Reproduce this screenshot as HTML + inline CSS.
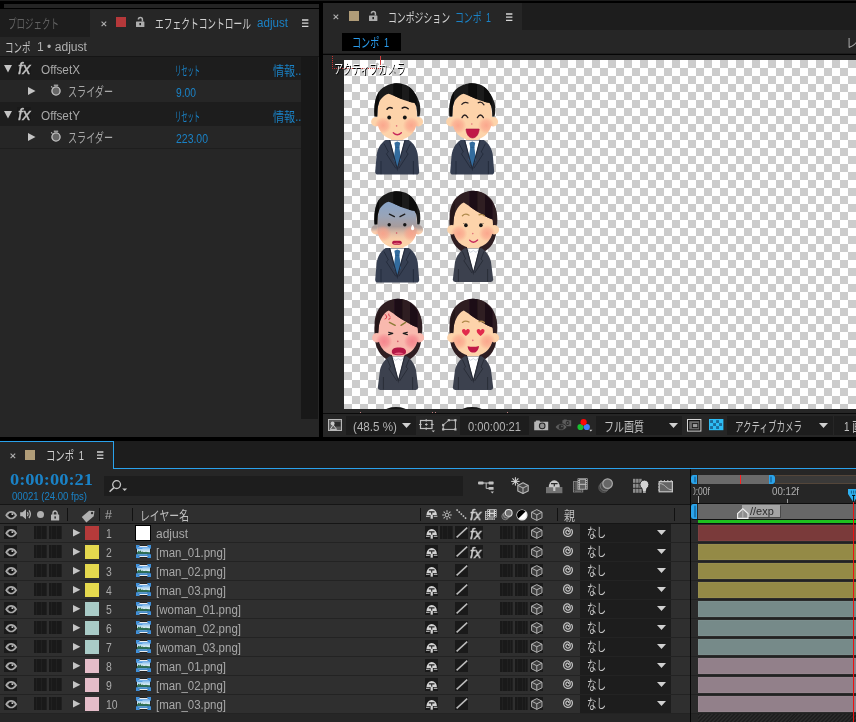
<!DOCTYPE html>
<html lang="ja"><head><meta charset="utf-8"><title>After Effects</title><style>
html,body{margin:0;padding:0;background:#000;}
body{width:856px;height:722px;overflow:hidden;position:relative;}
.a{position:absolute;}
.t{position:absolute;white-space:pre;transform-origin:0 50%;}
svg{overflow:visible;}
</style></head><body>
<svg class="a" width="0" height="0"><defs><linearGradient id="skyg" x1="0" y1="0" x2="0" y2="1"><stop offset="0" stop-color="#5ba0e6"/><stop offset="0.32" stop-color="#b4d8f2"/><stop offset="0.5" stop-color="#d6eaf4"/><stop offset="0.62" stop-color="#3f7f62"/><stop offset="0.7" stop-color="#2d6a58"/><stop offset="0.78" stop-color="#3a80b8"/><stop offset="1" stop-color="#4f94d4"/></linearGradient><filter id="hblur" x="-20%" y="-20%" width="140%" height="140%"><feGaussianBlur stdDeviation="0.7 0"/></filter><radialGradient id="cheek"><stop offset="0" stop-color="#fa9f88" stop-opacity="0.85"/><stop offset="0.55" stop-color="#fa9f88" stop-opacity="0.55"/><stop offset="1" stop-color="#fa9f88" stop-opacity="0"/></radialGradient><radialGradient id="cheekr"><stop offset="0" stop-color="#f4808a" stop-opacity="0.9"/><stop offset="0.55" stop-color="#f4808a" stop-opacity="0.6"/><stop offset="1" stop-color="#f4808a" stop-opacity="0"/></radialGradient><linearGradient id="shockg" gradientUnits="userSpaceOnUse" x1="0" y1="14" x2="0" y2="57"><stop offset="0" stop-color="#8ba4c6"/><stop offset="0.25" stop-color="#98a4b8"/><stop offset="0.5" stop-color="#a89c9c"/><stop offset="0.72" stop-color="#e0b8a4" stop-opacity="0.5"/><stop offset="0.9" stop-color="#fdd3aa" stop-opacity="0"/></linearGradient><linearGradient id="shockg2" x1="0" y1="0" x2="0" y2="1"><stop offset="0" stop-color="#a89c9c"/><stop offset="0.3" stop-color="#b4a49e"/><stop offset="0.7" stop-color="#f4ccb0"/><stop offset="1" stop-color="#fdd3aa"/></linearGradient></defs></svg>
<div class="a" style="left:0px;top:0px;width:856px;height:1px;background:#1b1b1b;"></div>
<div class="a" style="left:4px;top:4px;width:315px;height:4px;background:#242424;"></div>
<div class="a" style="left:0px;top:9px;width:319px;height:428px;background:#262626;"></div>
<div class="a" style="left:0px;top:9px;width:90px;height:28px;background:#1d1d1d;"></div>
<span class="t" style="left:8px;top:16.5px;font-family:'Liberation Sans','Noto Sans CJK JP',sans-serif;font-size:13px;font-weight:400;line-height:13px;color:#626262;transform:scaleX(0.6537);">プロジェクト</span>
<svg class="a" style="left:100.8px;top:20.8px;" width="6" height="6" viewBox="0 0 6 6"><path d="M0.6 0.6L5.2 5.2M5.2 0.6L0.6 5.2" stroke="#b0b0b0" stroke-width="1.1" fill="none"/></svg>
<div class="a" style="left:116px;top:17px;width:10px;height:10px;background:#b5383a;"></div>
<svg class="a" style="left:135.8px;top:17px;" width="9" height="10" viewBox="0 0 9 10"><rect x="0" y="4.4" width="8.4" height="5.6" rx="0.6" fill="#adadad"/><path d="M2.4 2.6A2 2 0 0 1 6.4 2.6V4.6" stroke="#adadad" stroke-width="1.5" fill="none"/><rect x="3.4" y="6" width="1.6" height="2.2" fill="#222"/></svg>
<span class="t" style="left:155px;top:16.5px;font-family:'Liberation Sans','Noto Sans CJK JP',sans-serif;font-size:13px;font-weight:400;line-height:13px;color:#d2d2d2;transform:scaleX(0.6713);">エフェクトコントロール</span>
<span class="t" style="left:257px;top:17px;font-family:'Liberation Sans','Noto Sans CJK JP',sans-serif;font-size:12px;font-weight:400;line-height:12px;color:#1a82c6;transform:scaleX(0.9678);">adjust</span>
<svg class="a" style="left:301.6px;top:18.6px;" width="7" height="9" viewBox="0 0 7 9"><path d="M0 1H6.4M0 4.2H6.4M0 7.4H6.4" stroke="#d6d6d6" stroke-width="1.3"/></svg>
<span class="t" style="left:5px;top:40.5px;font-family:'Liberation Sans','Noto Sans CJK JP',sans-serif;font-size:13px;font-weight:400;line-height:13px;color:#c4c4c4;transform:scaleX(0.6536);">コンポ</span>
<span class="t" style="left:36.5px;top:41px;font-family:'Liberation Sans','Noto Sans CJK JP',sans-serif;font-size:12px;font-weight:400;line-height:12px;color:#b0b0b0;transform:scaleX(1.0085);">1 • adjust</span>
<div class="a" style="left:0px;top:56px;width:319px;height:1px;background:#151515;"></div>
<div class="a" style="left:0px;top:57px;width:301px;height:23px;background:#1d1d1d;"></div>
<div class="a" style="left:0px;top:102px;width:301px;height:24px;background:#1d1d1d;"></div>
<div class="a" style="left:0px;top:148px;width:301px;height:1px;background:#1e1e1e;"></div>
<div class="a" style="left:301px;top:57px;width:17px;height:362px;background:#181818;"></div>
<svg class="a" style="left:4.2px;top:64.8px;" width="8" height="7.5" viewBox="0 0 8 7.5"><path d="M0 0H8L4.0 7.5Z" fill="#c4c4c4"/></svg>
<div class="a" style="left:17px;top:61px;width:14px;height:14px;background:#191919;"></div>
<span class="t" style="left:17.6px;top:60.5px;font-family:'Liberation Sans',sans-serif;font-size:16px;font-weight:400;line-height:16px;color:#c0c0c0;transform:scaleX(1.0118);font-style:italic;-webkit-text-stroke:0.4px #c0c0c0;will-change:transform;">fx</span>
<span class="t" style="left:41px;top:64px;font-family:'Liberation Sans','Noto Sans CJK JP',sans-serif;font-size:12px;font-weight:400;line-height:12px;color:#a9a9a9;transform:scaleX(0.9800);">OffsetX</span>
<span class="t" style="left:175px;top:63.5px;font-family:'Liberation Sans','Noto Sans CJK JP',sans-serif;font-size:13px;font-weight:400;line-height:13px;color:#1a82c6;transform:scaleX(0.4806);">リセット</span>
<span class="t" style="left:272.5px;top:63.5px;font-family:'Liberation Sans','Noto Sans CJK JP',sans-serif;font-size:13px;font-weight:400;line-height:13px;color:#1a82c6;transform:scaleX(0.8515);">情報..</span>
<svg class="a" style="left:28px;top:87px;" width="7.5" height="8" viewBox="0 0 7.5 8"><path d="M0 0L7.5 4.0L0 8Z" fill="#c4c4c4"/></svg>
<svg class="a" style="left:49.6px;top:84.2px;" width="12" height="13" viewBox="0 0 12 13"><circle cx="6" cy="7" r="4.1" fill="#666" stroke="#c4c4c4" stroke-width="1.3"/><path d="M3.8 1.2H8.2" stroke="#c4c4c4" stroke-width="1.1"/><path d="M1.2 2.4L2.4 3.6" stroke="#c4c4c4" stroke-width="1.1"/></svg>
<span class="t" style="left:68px;top:84.5px;font-family:'Liberation Sans','Noto Sans CJK JP',sans-serif;font-size:13px;font-weight:400;line-height:13px;color:#a9a9a9;transform:scaleX(0.6978);">スライダー</span>
<span class="t" style="left:176px;top:87px;font-family:'Liberation Sans','Noto Sans CJK JP',sans-serif;font-size:12px;font-weight:400;line-height:12px;color:#1a82c6;transform:scaleX(0.8562);">9.00</span>
<svg class="a" style="left:4.2px;top:110.8px;" width="8" height="7.5" viewBox="0 0 8 7.5"><path d="M0 0H8L4.0 7.5Z" fill="#c4c4c4"/></svg>
<div class="a" style="left:17px;top:107px;width:14px;height:14px;background:#191919;"></div>
<span class="t" style="left:17.6px;top:106.5px;font-family:'Liberation Sans',sans-serif;font-size:16px;font-weight:400;line-height:16px;color:#c0c0c0;transform:scaleX(1.0118);font-style:italic;-webkit-text-stroke:0.4px #c0c0c0;will-change:transform;">fx</span>
<span class="t" style="left:41px;top:110px;font-family:'Liberation Sans','Noto Sans CJK JP',sans-serif;font-size:12px;font-weight:400;line-height:12px;color:#a9a9a9;transform:scaleX(0.9800);">OffsetY</span>
<span class="t" style="left:175px;top:109.5px;font-family:'Liberation Sans','Noto Sans CJK JP',sans-serif;font-size:13px;font-weight:400;line-height:13px;color:#1a82c6;transform:scaleX(0.4806);">リセット</span>
<span class="t" style="left:272.5px;top:109.5px;font-family:'Liberation Sans','Noto Sans CJK JP',sans-serif;font-size:13px;font-weight:400;line-height:13px;color:#1a82c6;transform:scaleX(0.8515);">情報..</span>
<svg class="a" style="left:28px;top:133px;" width="7.5" height="8" viewBox="0 0 7.5 8"><path d="M0 0L7.5 4.0L0 8Z" fill="#c4c4c4"/></svg>
<svg class="a" style="left:49.6px;top:130.2px;" width="12" height="13" viewBox="0 0 12 13"><circle cx="6" cy="7" r="4.1" fill="#666" stroke="#c4c4c4" stroke-width="1.3"/><path d="M3.8 1.2H8.2" stroke="#c4c4c4" stroke-width="1.1"/><path d="M1.2 2.4L2.4 3.6" stroke="#c4c4c4" stroke-width="1.1"/></svg>
<span class="t" style="left:68px;top:130.5px;font-family:'Liberation Sans','Noto Sans CJK JP',sans-serif;font-size:13px;font-weight:400;line-height:13px;color:#a9a9a9;transform:scaleX(0.6978);">スライダー</span>
<span class="t" style="left:176px;top:133px;font-family:'Liberation Sans','Noto Sans CJK JP',sans-serif;font-size:12px;font-weight:400;line-height:12px;color:#1a82c6;transform:scaleX(0.8719);">223.00</span>
<div class="a" style="left:323px;top:3px;width:533px;height:434px;background:#262626;"></div>
<div class="a" style="left:522px;top:3px;width:334px;height:27px;background:#1d1d1d;"></div>
<svg class="a" style="left:333.4px;top:14.4px;" width="6" height="6" viewBox="0 0 6 6"><path d="M0.6 0.6L5.2 5.2M5.2 0.6L0.6 5.2" stroke="#b0b0b0" stroke-width="1.1" fill="none"/></svg>
<div class="a" style="left:349px;top:11px;width:10px;height:10px;background:#b09c78;"></div>
<svg class="a" style="left:368.8px;top:11px;" width="9" height="10" viewBox="0 0 9 10"><rect x="0" y="4.4" width="8.4" height="5.6" rx="0.6" fill="#adadad"/><path d="M2.4 2.6A2 2 0 0 1 6.4 2.6V4.6" stroke="#adadad" stroke-width="1.5" fill="none"/><rect x="3.4" y="6" width="1.6" height="2.2" fill="#222"/></svg>
<span class="t" style="left:388px;top:10.5px;font-family:'Liberation Sans','Noto Sans CJK JP',sans-serif;font-size:13px;font-weight:400;line-height:13px;color:#d2d2d2;transform:scaleX(0.6812);">コンポジション</span>
<span class="t" style="left:455px;top:10.5px;font-family:'Liberation Sans','Noto Sans CJK JP',sans-serif;font-size:13px;font-weight:400;word-spacing:3px;line-height:13px;color:#1a82c6;transform:scaleX(0.6813);">コンポ 1</span>
<svg class="a" style="left:505.8px;top:12.8px;" width="7" height="9" viewBox="0 0 7 9"><path d="M0 1H6.4M0 4.2H6.4M0 7.4H6.4" stroke="#d6d6d6" stroke-width="1.3"/></svg>
<div class="a" style="left:342px;top:33px;width:59px;height:18px;background:#000;"></div>
<span class="t" style="left:352px;top:35.5px;font-family:'Liberation Sans','Noto Sans CJK JP',sans-serif;font-size:13px;font-weight:400;word-spacing:3px;line-height:13px;color:#2a9cec;transform:scaleX(0.7002);">コンポ 1</span>
<span class="t" style="left:846px;top:35.5px;font-family:'Liberation Sans','Noto Sans CJK JP',sans-serif;font-size:13px;font-weight:400;line-height:13px;color:#a9a9a9;transform:scaleX(0.8714);">レンダ</span>
<div class="a" style="left:323px;top:54px;width:533px;height:1px;background:#050505;"></div>
<div class="a" style="left:323px;top:53px;width:533px;height:1px;background:#1c1c1c;"></div>
<div class="a" style="left:344px;top:60px;width:512px;height:349px;background:repeating-conic-gradient(#ccc 0 25%,#fff 0 50%) 0 0/16px 16px;"></div>
<svg class="a" style="left:370.8px;top:83px" width="52" height="92" viewBox="0 0 52 92"><rect x="20" y="48" width="12.4" height="13" fill="#fdd3aa"/><path d="M14.6 57C10 60 6.6 65 5.6 72L4.2 88.8Q4.2 91.6 6.9 91.6H45.5Q48.2 91.6 48.2 88.8L46.8 72C45.8 65 42.4 60 37.8 57Z" fill="#363f52"/><path d="M19.2 57.4H33.6L26.3 85.4Z" fill="#fff"/><path d="M23.4 59.8L26.3 58.6L29.2 59.8L28.4 64.4L30 76.6L26.3 84.4L22.6 76.6L24.2 64.4Z" fill="#336c9e"/><path d="M24.2 64.4H28.4" stroke="#245a8c" stroke-width="0.7"/><path d="M18.6 57.2L26.3 86L34 57.2" fill="none" stroke="#232a3a" stroke-width="1.1"/><path d="M13 60.6L17.4 69L15.4 70.8L24.8 85.4M39.4 60.6L35.2 69L37.2 70.8L27.8 85.4" fill="none" stroke="#232a3a" stroke-width="0.9"/><path d="M10 78V91.2M42.4 78V91.2" stroke="#232a3a" stroke-width="0.9"/><circle cx="4.8" cy="38.8" r="4.7" fill="#fdd3aa"/><circle cx="47.4" cy="38.8" r="4.7" fill="#fdd3aa"/><path d="M26 4C12 4 6.2 16 6.2 36C6.2 49 14.6 57 26 57C37.4 57 46 49 46 36C46 16 40 4 26 4Z" fill="#fdd3aa"/><clipPath id="fhc1"><path d="M26 4C12 4 6.2 16 6.2 36C6.2 49 14.6 57 26 57C37.4 57 46 49 46 36C46 16 40 4 26 4Z"/><circle cx="4.8" cy="38.8" r="4.7"/><circle cx="47.4" cy="38.8" r="4.7"/></clipPath><g clip-path="url(#fhc1)"><circle cx="12" cy="42.4" r="8.4" fill="url(#cheek)"/><circle cx="40.2" cy="42.4" r="8.4" fill="url(#cheek)"/></g><clipPath id="hc1"><path d="M3.5 33.6C2.8 27 3.4 19 5.6 13C7.6 8 11 4.6 15 3C18 1 21.5 0.2 25.2 0.2C30 0.2 34 1 37 3C42 6.4 46.4 13 48.6 20C49.6 24.6 49.6 30 48.5 33.6L46.2 33.6C46.2 30 46 27 45.6 25C45.2 22.6 44.4 21 43.4 19.8C38 19.4 31 16.4 25.2 13.8C22 12.4 19.6 11.2 17.5 10.7C14.6 11.4 11.4 14 9.1 17.3C7.4 20.4 6.7 24 6.6 27L6.3 33.6Z"/></clipPath><path d="M3.5 33.6C2.8 27 3.4 19 5.6 13C7.6 8 11 4.6 15 3C18 1 21.5 0.2 25.2 0.2C30 0.2 34 1 37 3C42 6.4 46.4 13 48.6 20C49.6 24.6 49.6 30 48.5 33.6L46.2 33.6C46.2 30 46 27 45.6 25C45.2 22.6 44.4 21 43.4 19.8C38 19.4 31 16.4 25.2 13.8C22 12.4 19.6 11.2 17.5 10.7C14.6 11.4 11.4 14 9.1 17.3C7.4 20.4 6.7 24 6.6 27L6.3 33.6Z" fill="#1b1b1b"/><g clip-path="url(#hc1)" filter="url(#hblur)"><rect x="22.6" y="-2" width="8" height="40" fill="#090909"/><rect x="38" y="-2" width="7.4" height="40" fill="#090909"/><rect x="-1" y="-2" width="9" height="40" fill="#090909" opacity="0.6"/></g><path d="M16 26.2Q18.2 23.4 21.2 25.2M31.2 25.2Q34.2 23.2 37.2 25.8" fill="none" stroke="#1a1414" stroke-width="1.5" stroke-linecap="round"/><circle cx="18.2" cy="34.5" r="1.9" fill="#151515"/><circle cx="33.8" cy="34.5" r="1.9" fill="#151515"/><circle cx="25.6" cy="42.9" r="0.8" fill="#e0707a"/><path d="M22.3 49.8Q26.2 53.8 30.4 49.8" fill="none" stroke="#c8285c" stroke-width="1.3" stroke-linecap="round"/></svg>
<svg class="a" style="left:445.8px;top:83px" width="52" height="92" viewBox="0 0 52 92"><rect x="20" y="48" width="12.4" height="13" fill="#fdd3aa"/><path d="M14.6 57C10 60 6.6 65 5.6 72L4.2 88.8Q4.2 91.6 6.9 91.6H45.5Q48.2 91.6 48.2 88.8L46.8 72C45.8 65 42.4 60 37.8 57Z" fill="#363f52"/><path d="M19.2 57.4H33.6L26.3 85.4Z" fill="#fff"/><path d="M23.4 59.8L26.3 58.6L29.2 59.8L28.4 64.4L30 76.6L26.3 84.4L22.6 76.6L24.2 64.4Z" fill="#336c9e"/><path d="M24.2 64.4H28.4" stroke="#245a8c" stroke-width="0.7"/><path d="M18.6 57.2L26.3 86L34 57.2" fill="none" stroke="#232a3a" stroke-width="1.1"/><path d="M13 60.6L17.4 69L15.4 70.8L24.8 85.4M39.4 60.6L35.2 69L37.2 70.8L27.8 85.4" fill="none" stroke="#232a3a" stroke-width="0.9"/><path d="M10 78V91.2M42.4 78V91.2" stroke="#232a3a" stroke-width="0.9"/><circle cx="4.8" cy="38.8" r="4.7" fill="#fdd3aa"/><circle cx="47.4" cy="38.8" r="4.7" fill="#fdd3aa"/><path d="M26 4C12 4 6.2 16 6.2 36C6.2 49 14.6 57 26 57C37.4 57 46 49 46 36C46 16 40 4 26 4Z" fill="#fdd3aa"/><clipPath id="fhc2"><path d="M26 4C12 4 6.2 16 6.2 36C6.2 49 14.6 57 26 57C37.4 57 46 49 46 36C46 16 40 4 26 4Z"/><circle cx="4.8" cy="38.8" r="4.7"/><circle cx="47.4" cy="38.8" r="4.7"/></clipPath><g clip-path="url(#fhc2)"><circle cx="12" cy="42.4" r="8.4" fill="url(#cheek)"/><circle cx="40.2" cy="42.4" r="8.4" fill="url(#cheek)"/></g><clipPath id="hc2"><path d="M3.5 33.6C2.8 27 3.4 19 5.6 13C7.6 8 11 4.6 15 3C18 1 21.5 0.2 25.2 0.2C30 0.2 34 1 37 3C42 6.4 46.4 13 48.6 20C49.6 24.6 49.6 30 48.5 33.6L46.2 33.6C46.2 30 46 27 45.6 25C45.2 22.6 44.4 21 43.4 19.8C38 19.4 31 16.4 25.2 13.8C22 12.4 19.6 11.2 17.5 10.7C14.6 11.4 11.4 14 9.1 17.3C7.4 20.4 6.7 24 6.6 27L6.3 33.6Z"/></clipPath><path d="M3.5 33.6C2.8 27 3.4 19 5.6 13C7.6 8 11 4.6 15 3C18 1 21.5 0.2 25.2 0.2C30 0.2 34 1 37 3C42 6.4 46.4 13 48.6 20C49.6 24.6 49.6 30 48.5 33.6L46.2 33.6C46.2 30 46 27 45.6 25C45.2 22.6 44.4 21 43.4 19.8C38 19.4 31 16.4 25.2 13.8C22 12.4 19.6 11.2 17.5 10.7C14.6 11.4 11.4 14 9.1 17.3C7.4 20.4 6.7 24 6.6 27L6.3 33.6Z" fill="#1b1b1b"/><g clip-path="url(#hc2)" filter="url(#hblur)"><rect x="22.6" y="-2" width="8" height="40" fill="#090909"/><rect x="38" y="-2" width="7.4" height="40" fill="#090909"/><rect x="-1" y="-2" width="9" height="40" fill="#090909" opacity="0.6"/></g><path d="M15.8 21.4Q18.4 18.2 22 20M32.2 19.8Q35.4 18 38 21.8" fill="none" stroke="#2a2020" stroke-width="1.2" stroke-linecap="round"/><path d="M16 34.6Q18.6 29.4 21.8 34.6M31.4 34.6Q34.4 29.4 37.4 34.6" fill="none" stroke="#2a2020" stroke-width="1.3" stroke-linecap="round"/><circle cx="25.8" cy="41" r="0.8" fill="#e0707a"/><path d="M20 46H33.2C33 51 30 55 26.6 55C23 55 20.2 51 20 46Z" fill="#c01848" stroke="#a81040" stroke-width="0.6" stroke-linejoin="round"/></svg>
<svg class="a" style="left:370.8px;top:191px" width="52" height="92" viewBox="0 0 52 92"><rect x="20" y="48" width="12.4" height="13" fill="#fdd3aa"/><path d="M14.6 57C10 60 6.6 65 5.6 72L4.2 88.8Q4.2 91.6 6.9 91.6H45.5Q48.2 91.6 48.2 88.8L46.8 72C45.8 65 42.4 60 37.8 57Z" fill="#363f52"/><path d="M19.2 57.4H33.6L26.3 85.4Z" fill="#fff"/><path d="M23.4 59.8L26.3 58.6L29.2 59.8L28.4 64.4L30 76.6L26.3 84.4L22.6 76.6L24.2 64.4Z" fill="#336c9e"/><path d="M24.2 64.4H28.4" stroke="#245a8c" stroke-width="0.7"/><path d="M18.6 57.2L26.3 86L34 57.2" fill="none" stroke="#232a3a" stroke-width="1.1"/><path d="M13 60.6L17.4 69L15.4 70.8L24.8 85.4M39.4 60.6L35.2 69L37.2 70.8L27.8 85.4" fill="none" stroke="#232a3a" stroke-width="0.9"/><path d="M10 78V91.2M42.4 78V91.2" stroke="#232a3a" stroke-width="0.9"/><circle cx="4.8" cy="38.8" r="4.7" fill="url(#shockg2)"/><circle cx="47.4" cy="38.8" r="4.7" fill="url(#shockg2)"/><path d="M26 4C12 4 6.2 16 6.2 36C6.2 49 14.6 57 26 57C37.4 57 46 49 46 36C46 16 40 4 26 4Z" fill="#fdd3aa"/><path d="M26 4C12 4 6.2 16 6.2 36C6.2 49 14.6 57 26 57C37.4 57 46 49 46 36C46 16 40 4 26 4Z" fill="url(#shockg)"/><clipPath id="fhc3"><path d="M26 4C12 4 6.2 16 6.2 36C6.2 49 14.6 57 26 57C37.4 57 46 49 46 36C46 16 40 4 26 4Z"/><circle cx="4.8" cy="38.8" r="4.7"/><circle cx="47.4" cy="38.8" r="4.7"/></clipPath><g clip-path="url(#fhc3)"><circle cx="12" cy="42.4" r="8.4" fill="url(#cheek)"/><circle cx="40.2" cy="42.4" r="8.4" fill="url(#cheek)"/></g><clipPath id="hc3"><path d="M3.5 33.6C2.8 27 3.4 19 5.6 13C7.6 8 11 4.6 15 3C18 1 21.5 0.2 25.2 0.2C30 0.2 34 1 37 3C42 6.4 46.4 13 48.6 20C49.6 24.6 49.6 30 48.5 33.6L46.2 33.6C46.2 30 46 27 45.6 25C45.2 22.6 44.4 21 43.4 19.8C38 19.4 31 16.4 25.2 13.8C22 12.4 19.6 11.2 17.5 10.7C14.6 11.4 11.4 14 9.1 17.3C7.4 20.4 6.7 24 6.6 27L6.3 33.6Z"/></clipPath><path d="M3.5 33.6C2.8 27 3.4 19 5.6 13C7.6 8 11 4.6 15 3C18 1 21.5 0.2 25.2 0.2C30 0.2 34 1 37 3C42 6.4 46.4 13 48.6 20C49.6 24.6 49.6 30 48.5 33.6L46.2 33.6C46.2 30 46 27 45.6 25C45.2 22.6 44.4 21 43.4 19.8C38 19.4 31 16.4 25.2 13.8C22 12.4 19.6 11.2 17.5 10.7C14.6 11.4 11.4 14 9.1 17.3C7.4 20.4 6.7 24 6.6 27L6.3 33.6Z" fill="#1b1b1b"/><g clip-path="url(#hc3)" filter="url(#hblur)"><rect x="22.6" y="-2" width="8" height="40" fill="#090909"/><rect x="38" y="-2" width="7.4" height="40" fill="#090909"/><rect x="-1" y="-2" width="9" height="40" fill="#090909" opacity="0.6"/></g><path d="M18.4 23.2L23.4 25.6M33.8 23.2L29 25.6" fill="none" stroke="#1c1c1c" stroke-width="1.3" stroke-linecap="round"/><circle cx="18.2" cy="33.8" r="1.7" fill="#151515"/><circle cx="33.8" cy="33.8" r="1.7" fill="#151515"/><path d="M41.6 33.4C42.8 35.4 43.2 36.6 43.2 37.6A1.6 1.6 0 0 1 40 37.6C40 36.6 40.4 35.4 41.6 33.4Z" fill="#fff"/><circle cx="25.6" cy="42" r="0.8" fill="#d05060"/><path d="M21.2 51.2C21.6 49.4 23.6 49.6 26 49.8C28.4 49.6 30.2 49.4 30.8 51.2C31.2 53 30 53.8 26 53.8C22 53.8 20.8 53 21.2 51.2Z" fill="#b41846"/><path d="M22.6 52.8Q26 51.6 29.4 52.8" fill="none" stroke="#f08090" stroke-width="0.8"/></svg>
<svg class="a" style="left:446.5px;top:191px" width="52" height="92" viewBox="0 0 52 92"><path d="M26 0C12 0 2.6 10 2.6 26C2.4 36 3 44 5 49C7.4 54.5 10.5 57.6 14 60H38.4C42 57.6 45.2 54.5 47.4 49C49.6 44 50 36 49.8 26C49.8 10 40 0 26 0Z" fill="#2f1e22"/><rect x="20" y="48" width="12.4" height="13" fill="#fdd3aa"/><path d="M17.5 57.2C13 60 9.4 65 8 71L5.8 88.6Q5.8 91 8.2 91H43.8Q46.2 91 46.2 88.6L44 71C42.6 65 39 60 34.8 57.2Z" fill="#3c414e"/><path d="M20.2 57.6H32.2L26.3 81Z" fill="#fff"/><path d="M20.6 58.2L23.4 61.4L26.3 59.6L29.2 61.4L31.8 58.2" fill="none" stroke="#c4ccd8" stroke-width="0.8"/><path d="M19.8 57.4L26.3 82L32.6 57.4" fill="none" stroke="#272b36" stroke-width="1.1"/><path d="M15.4 60.4L18.6 68L16.8 69.6L25 82M37 60.4L34 68L35.8 69.6L27.6 82" fill="none" stroke="#272b36" stroke-width="0.9"/><path d="M11.4 78V90.6M40.6 78V90.6" stroke="#272b36" stroke-width="0.9"/><circle cx="4.8" cy="38.8" r="4.7" fill="#fdd3aa"/><circle cx="47.4" cy="38.8" r="4.7" fill="#fdd3aa"/><path d="M26 4C12 4 6.2 16 6.2 36C6.2 49 14.6 57 26 57C37.4 57 46 49 46 36C46 16 40 4 26 4Z" fill="#fdd3aa"/><clipPath id="fhc4"><path d="M26 4C12 4 6.2 16 6.2 36C6.2 49 14.6 57 26 57C37.4 57 46 49 46 36C46 16 40 4 26 4Z"/><circle cx="4.8" cy="38.8" r="4.7"/><circle cx="47.4" cy="38.8" r="4.7"/></clipPath><g clip-path="url(#fhc4)"><circle cx="12" cy="42.4" r="8.4" fill="url(#cheek)"/><circle cx="40.2" cy="42.4" r="8.4" fill="url(#cheek)"/></g><clipPath id="hc4"><path d="M2.8 33.6C2.4 27 3.4 20 5.6 15.2C7.6 10.6 11 6.4 15 3.6C18 1.4 22 -0.2 25.9 -0.2C30 -0.2 34 1 37 3C41.6 6 46 11.6 48.4 17C50 21 50.8 27 50.2 33.6L46.3 33.6C46.4 31.4 46.2 30 45.5 28.5C40 26.4 33 22.4 27 18.4C23 15.6 19.6 13 16.8 11.4C14 12.6 11.8 15 10.5 17.3C8.4 20.6 7 25 6.6 29L6.3 33.6Z"/></clipPath><path d="M2.8 33.6C2.4 27 3.4 20 5.6 15.2C7.6 10.6 11 6.4 15 3.6C18 1.4 22 -0.2 25.9 -0.2C30 -0.2 34 1 37 3C41.6 6 46 11.6 48.4 17C50 21 50.8 27 50.2 33.6L46.3 33.6C46.4 31.4 46.2 30 45.5 28.5C40 26.4 33 22.4 27 18.4C23 15.6 19.6 13 16.8 11.4C14 12.6 11.8 15 10.5 17.3C8.4 20.6 7 25 6.6 29L6.3 33.6Z" fill="#2f1e22"/><g clip-path="url(#hc4)" filter="url(#hblur)"><rect x="22.6" y="-2" width="8" height="40" fill="#1c1013"/><rect x="38" y="-2" width="7.4" height="40" fill="#1c1013"/><rect x="-1" y="-2" width="9" height="40" fill="#1c1013" opacity="0.6"/></g><path d="M15.4 24.8Q18.2 21.8 22 24.2M32 23.8Q35 22.6 37.4 24.8" fill="none" stroke="#b08a4c" stroke-width="1.3" stroke-linecap="round"/><ellipse cx="18.9" cy="34.2" rx="1.8" ry="2" fill="#151515"/><ellipse cx="33.9" cy="34.2" rx="1.8" ry="2" fill="#151515"/><path d="M17.2 33L16.5 32.2M35.6 33L36.3 32.2" stroke="#151515" stroke-width="0.7"/><circle cx="25.8" cy="42.6" r="0.8" fill="#e0707a"/><path d="M22.6 49.2Q26.2 53.4 30.6 49" fill="none" stroke="#c8285c" stroke-width="1.3" stroke-linecap="round"/></svg>
<svg class="a" style="left:371.5px;top:299px" width="52" height="92" viewBox="0 0 52 92"><path d="M26 0C12 0 2.6 10 2.6 26C2.4 36 3 44 5 49C7.4 54.5 10.5 57.6 14 60H38.4C42 57.6 45.2 54.5 47.4 49C49.6 44 50 36 49.8 26C49.8 10 40 0 26 0Z" fill="#2f1e22"/><rect x="20" y="48" width="12.4" height="13" fill="#f9b9ae"/><path d="M17.5 57.2C13 60 9.4 65 8 71L5.8 88.6Q5.8 91 8.2 91H43.8Q46.2 91 46.2 88.6L44 71C42.6 65 39 60 34.8 57.2Z" fill="#3c414e"/><path d="M20.2 57.6H32.2L26.3 81Z" fill="#fff"/><path d="M20.6 58.2L23.4 61.4L26.3 59.6L29.2 61.4L31.8 58.2" fill="none" stroke="#c4ccd8" stroke-width="0.8"/><path d="M19.8 57.4L26.3 82L32.6 57.4" fill="none" stroke="#272b36" stroke-width="1.1"/><path d="M15.4 60.4L18.6 68L16.8 69.6L25 82M37 60.4L34 68L35.8 69.6L27.6 82" fill="none" stroke="#272b36" stroke-width="0.9"/><path d="M11.4 78V90.6M40.6 78V90.6" stroke="#272b36" stroke-width="0.9"/><circle cx="4.8" cy="38.8" r="4.7" fill="#f9b9ae"/><circle cx="47.4" cy="38.8" r="4.7" fill="#f9b9ae"/><path d="M26 4C12 4 6.2 16 6.2 36C6.2 49 14.6 57 26 57C37.4 57 46 49 46 36C46 16 40 4 26 4Z" fill="#f9b9ae"/><clipPath id="fhc5"><path d="M26 4C12 4 6.2 16 6.2 36C6.2 49 14.6 57 26 57C37.4 57 46 49 46 36C46 16 40 4 26 4Z"/><circle cx="4.8" cy="38.8" r="4.7"/><circle cx="47.4" cy="38.8" r="4.7"/></clipPath><g clip-path="url(#fhc5)"><circle cx="12" cy="42.4" r="8.4" fill="url(#cheekr)"/><circle cx="40.2" cy="42.4" r="8.4" fill="url(#cheekr)"/></g><clipPath id="hc5"><path d="M2.8 33.6C2.4 27 3.4 20 5.6 15.2C7.6 10.6 11 6.4 15 3.6C18 1.4 22 -0.2 25.9 -0.2C30 -0.2 34 1 37 3C41.6 6 46 11.6 48.4 17C50 21 50.8 27 50.2 33.6L46.3 33.6C46.4 31.4 46.2 30 45.5 28.5C40 26.4 33 22.4 27 18.4C23 15.6 19.6 13 16.8 11.4C14 12.6 11.8 15 10.5 17.3C8.4 20.6 7 25 6.6 29L6.3 33.6Z"/></clipPath><path d="M2.8 33.6C2.4 27 3.4 20 5.6 15.2C7.6 10.6 11 6.4 15 3.6C18 1.4 22 -0.2 25.9 -0.2C30 -0.2 34 1 37 3C41.6 6 46 11.6 48.4 17C50 21 50.8 27 50.2 33.6L46.3 33.6C46.4 31.4 46.2 30 45.5 28.5C40 26.4 33 22.4 27 18.4C23 15.6 19.6 13 16.8 11.4C14 12.6 11.8 15 10.5 17.3C8.4 20.6 7 25 6.6 29L6.3 33.6Z" fill="#2f1e22"/><g clip-path="url(#hc5)" filter="url(#hblur)"><rect x="22.6" y="-2" width="8" height="40" fill="#1c1013"/><rect x="38" y="-2" width="7.4" height="40" fill="#1c1013"/><rect x="-1" y="-2" width="9" height="40" fill="#1c1013" opacity="0.6"/></g><path d="M17.4 23.4L23.2 26.4M33.6 23.4L29 26.4" fill="none" stroke="#8a7a34" stroke-width="1.3" stroke-linecap="round"/><path d="M16.6 33.2L20.8 34.4L16.6 35.6M35.4 33.2L31.2 34.4L35.4 35.6" fill="none" stroke="#1c1c1c" stroke-width="1.1" stroke-linecap="round" stroke-linejoin="round"/><path d="M13 15.4Q14.8 16 14.6 17.8M16.6 15Q16.2 17 18 17.4M13 20Q15 19.6 14.8 18M18.4 19Q16.6 18.8 16.8 20.6" fill="none" stroke="#e03848" stroke-width="0.9" stroke-linecap="round"/><circle cx="25.8" cy="42.4" r="0.8" fill="#d05868"/><path d="M19.8 53C19.6 50 22.4 48.6 26.8 48.6C31.2 48.6 34.2 50 34 53C33.8 55.6 31.4 56.2 26.8 56.2C22.4 56.2 20 55.6 19.8 53Z" fill="#b41846"/><path d="M22 54.8Q26.8 52.4 31.8 54.8Q26.8 56 22 54.8Z" fill="#e86080"/></svg>
<svg class="a" style="left:446.5px;top:299px" width="52" height="92" viewBox="0 0 52 92"><path d="M26 0C12 0 2.6 10 2.6 26C2.4 36 3 44 5 49C7.4 54.5 10.5 57.6 14 60H38.4C42 57.6 45.2 54.5 47.4 49C49.6 44 50 36 49.8 26C49.8 10 40 0 26 0Z" fill="#2f1e22"/><rect x="20" y="48" width="12.4" height="13" fill="#fdd3aa"/><path d="M17.5 57.2C13 60 9.4 65 8 71L5.8 88.6Q5.8 91 8.2 91H43.8Q46.2 91 46.2 88.6L44 71C42.6 65 39 60 34.8 57.2Z" fill="#3c414e"/><path d="M20.2 57.6H32.2L26.3 81Z" fill="#fff"/><path d="M20.6 58.2L23.4 61.4L26.3 59.6L29.2 61.4L31.8 58.2" fill="none" stroke="#c4ccd8" stroke-width="0.8"/><path d="M19.8 57.4L26.3 82L32.6 57.4" fill="none" stroke="#272b36" stroke-width="1.1"/><path d="M15.4 60.4L18.6 68L16.8 69.6L25 82M37 60.4L34 68L35.8 69.6L27.6 82" fill="none" stroke="#272b36" stroke-width="0.9"/><path d="M11.4 78V90.6M40.6 78V90.6" stroke="#272b36" stroke-width="0.9"/><circle cx="4.8" cy="38.8" r="4.7" fill="#fdd3aa"/><circle cx="47.4" cy="38.8" r="4.7" fill="#fdd3aa"/><path d="M26 4C12 4 6.2 16 6.2 36C6.2 49 14.6 57 26 57C37.4 57 46 49 46 36C46 16 40 4 26 4Z" fill="#fdd3aa"/><clipPath id="fhc6"><path d="M26 4C12 4 6.2 16 6.2 36C6.2 49 14.6 57 26 57C37.4 57 46 49 46 36C46 16 40 4 26 4Z"/><circle cx="4.8" cy="38.8" r="4.7"/><circle cx="47.4" cy="38.8" r="4.7"/></clipPath><g clip-path="url(#fhc6)"><circle cx="12" cy="42.4" r="8.4" fill="url(#cheek)"/><circle cx="40.2" cy="42.4" r="8.4" fill="url(#cheek)"/></g><clipPath id="hc6"><path d="M2.8 33.6C2.4 27 3.4 20 5.6 15.2C7.6 10.6 11 6.4 15 3.6C18 1.4 22 -0.2 25.9 -0.2C30 -0.2 34 1 37 3C41.6 6 46 11.6 48.4 17C50 21 50.8 27 50.2 33.6L46.3 33.6C46.4 31.4 46.2 30 45.5 28.5C40 26.4 33 22.4 27 18.4C23 15.6 19.6 13 16.8 11.4C14 12.6 11.8 15 10.5 17.3C8.4 20.6 7 25 6.6 29L6.3 33.6Z"/></clipPath><path d="M2.8 33.6C2.4 27 3.4 20 5.6 15.2C7.6 10.6 11 6.4 15 3.6C18 1.4 22 -0.2 25.9 -0.2C30 -0.2 34 1 37 3C41.6 6 46 11.6 48.4 17C50 21 50.8 27 50.2 33.6L46.3 33.6C46.4 31.4 46.2 30 45.5 28.5C40 26.4 33 22.4 27 18.4C23 15.6 19.6 13 16.8 11.4C14 12.6 11.8 15 10.5 17.3C8.4 20.6 7 25 6.6 29L6.3 33.6Z" fill="#2f1e22"/><g clip-path="url(#hc6)" filter="url(#hblur)"><rect x="22.6" y="-2" width="8" height="40" fill="#1c1013"/><rect x="38" y="-2" width="7.4" height="40" fill="#1c1013"/><rect x="-1" y="-2" width="9" height="40" fill="#1c1013" opacity="0.6"/></g><path d="M15.4 23.4Q18.2 21 22 23M32 22.6Q35 21.6 37.4 23.6" fill="none" stroke="#b08a4c" stroke-width="1.3" stroke-linecap="round"/><path d="M0 1.2C-0.9 -1.2 -3.9 -0.9 -3.9 1.5C-3.9 3.6 -1.5 5.1 0 6.6C1.5 5.1 3.9 3.6 3.9 1.5C3.9 -0.9 0.9 -1.2 0 1.2Z" transform="translate(18.9 30.4)" fill="#e22a4c"/><path d="M0 1.2C-0.9 -1.2 -3.9 -0.9 -3.9 1.5C-3.9 3.6 -1.5 5.1 0 6.6C1.5 5.1 3.9 3.6 3.9 1.5C3.9 -0.9 0.9 -1.2 0 1.2Z" transform="translate(33.6 30.4)" fill="#e22a4c"/><circle cx="25.8" cy="41.4" r="0.8" fill="#e0707a"/><path d="M20.6 47.2Q26.4 48.6 32 47C31.6 51 29.6 53.6 26.4 53.6C23.2 53.6 21 51 20.6 47.2Z" fill="#c01848"/></svg>
<div class="a" style="left:344px;top:60px;width:512px;height:349px;overflow:hidden"><div class="a" style="left:40px;top:346.6px;width:24px;height:10px;border-radius:50%;background:#151515"></div><div class="a" style="left:115.6px;top:346.6px;width:24px;height:10px;border-radius:50%;background:#151515"></div></div>
<svg class="a" style="left:331px;top:55px" width="60" height="16"><path d="M1.5 1V13.5H50" stroke="#c83030" stroke-width="1" stroke-dasharray="1 1" fill="none"/><path d="M49.5 1V10" stroke="#d04040" stroke-width="1" fill="none"/></svg>
<span class="t" style="left:334px;top:61.5px;font-family:'Liberation Sans','Noto Sans CJK JP',sans-serif;font-size:13px;font-weight:400;line-height:13px;color:#fff;transform:scaleX(0.6922);text-shadow:1px 1px 0 #000;">アクティブカメラ</span>
<div class="a" style="left:323px;top:413px;width:533px;height:1px;background:#0a0a0a;"></div>
<div class="a" style="left:360px;top:412px;width:1px;height:1px;background:#c08080;"></div>
<div class="a" style="left:432px;top:412px;width:1px;height:1px;background:#c08080;"></div>
<div class="a" style="left:435px;top:412px;width:1px;height:1px;background:#c08080;"></div>
<div class="a" style="left:507px;top:412px;width:1px;height:1px;background:#c08080;"></div>
<div class="a" style="left:346px;top:416px;width:70px;height:19px;background:#1d1d1d;"></div>
<div class="a" style="left:460px;top:416px;width:69px;height:19px;background:#1d1d1d;"></div>
<div class="a" style="left:596px;top:416px;width:86px;height:19px;background:#1d1d1d;"></div>
<div class="a" style="left:727px;top:416px;width:106px;height:19px;background:#1d1d1d;"></div>
<div class="a" style="left:834px;top:416px;width:22px;height:19px;background:#1d1d1d;"></div>
<svg class="a" style="left:328px;top:419px;" width="14" height="12" viewBox="0 0 14 12"><rect x="0.5" y="0.5" width="13" height="11" fill="#5a5a5a" stroke="#b8b8b8" stroke-width="1"/><rect x="6.5" y="3" width="6" height="4.5" fill="#2a2a2a"/><circle cx="4.6" cy="4.4" r="1.9" fill="#c8c8c8"/><path d="M2.2 10.4L5.2 6L8.6 10.4Z" fill="none" stroke="#c8c8c8" stroke-width="1"/></svg>
<span class="t" style="left:353px;top:419.5px;font-family:'Liberation Sans','Noto Sans CJK JP',sans-serif;font-size:13px;font-weight:400;line-height:13px;color:#b4b4b4;transform:scaleX(0.8954);">(48.5 %)</span>
<svg class="a" style="left:402.4px;top:423.2px;" width="9" height="5" viewBox="0 0 9 5"><path d="M0 0H9L4.5 5Z" fill="#d0d0d0"/></svg>
<svg class="a" style="left:419.4px;top:418.6px;" width="17" height="14" viewBox="0 0 17 14"><rect x="1.5" y="1.5" width="11.5" height="8" fill="none" stroke="#c0c0c0" stroke-width="1.2"/><path d="M7.2 0V2.6M7.2 8.4V11M0 5.5H2.6M11.8 5.5H14.6M6 5.5H8.6M7.3 4.2V6.8" stroke="#c0c0c0" stroke-width="1"/><path d="M12.6 11.4H16L14.3 13.2Z" fill="#c0c0c0"/></svg>
<svg class="a" style="left:441.6px;top:418.6px;" width="15" height="12" viewBox="0 0 15 12"><path d="M1.2 10.4L1.2 6L6.8 1.2L13.4 1.2L13.4 10.4Z" fill="none" stroke="#c0c0c0" stroke-width="1"/><rect x="0.09999999999999987" y="9.3" width="2.2" height="2.2" fill="#c0c0c0"/><rect x="0.09999999999999987" y="4.9" width="2.2" height="2.2" fill="#c0c0c0"/><rect x="5.699999999999999" y="0.09999999999999987" width="2.2" height="2.2" fill="#c0c0c0"/><rect x="12.3" y="0.09999999999999987" width="2.2" height="2.2" fill="#c0c0c0"/><rect x="12.3" y="9.3" width="2.2" height="2.2" fill="#c0c0c0"/></svg>
<span class="t" style="left:468px;top:419.5px;font-family:'Liberation Sans','Noto Sans CJK JP',sans-serif;font-size:13px;font-weight:400;line-height:13px;color:#b4b4b4;transform:scaleX(0.8624);">0:00:00:21</span>
<svg class="a" style="left:534.2px;top:419.6px;" width="14.5" height="10.5" viewBox="0 0 14.5 10.5"><path d="M0.2 1.8H1.6L2 0.6H5.6L6 1.8H14.2V10.2H0.2Z" fill="#b4b4b4"/><circle cx="8.2" cy="5.9" r="3.3" fill="#222"/><circle cx="8.2" cy="5.9" r="2.3" fill="#909090"/></svg>
<svg class="a" style="left:554.6px;top:418.8px;" width="17" height="12" viewBox="0 0 17 12"><path d="M7.4 1.2H8.4L8.8 0.4H11.6L12 1.2H16.2V7.2H7.4Z" fill="#5c5c5c"/><circle cx="12.6" cy="4" r="1.9" fill="#262626"/><circle cx="12.6" cy="4" r="1" fill="#5c5c5c"/><path d="M0.2 8C2.2 5.2 4.2 4.6 6.2 4.6S10.2 5.2 12.2 8C10.2 10.8 8.2 11.4 6.2 11.4S2.2 10.8 0.2 8Z" fill="#5c5c5c" stroke="#262626" stroke-width="0.9"/><circle cx="6.2" cy="8" r="2.5" fill="#2a2a2a"/><circle cx="6.9" cy="7.3" r="0.9" fill="#5c5c5c"/></svg>
<svg class="a" style="left:577.4px;top:419px;" width="15" height="13" viewBox="0 0 15 13"><circle cx="3.5" cy="8" r="3.1" fill="#18be30"/><circle cx="9.8" cy="8" r="3.1" fill="#3f7ffc"/><circle cx="6.6" cy="3.2" r="3.1" fill="#fb0808"/><path d="M12.2 10.8H15.4L13.8 12.6Z" fill="#d0d0d0"/></svg>
<span class="t" style="left:604px;top:419.5px;font-family:'Liberation Sans','Noto Sans CJK JP',sans-serif;font-size:13px;font-weight:400;line-height:13px;color:#c4c4c4;transform:scaleX(0.7690);">フル画質</span>
<svg class="a" style="left:669.4px;top:423.2px;" width="9" height="5" viewBox="0 0 9 5"><path d="M0 0H9L4.5 5Z" fill="#d0d0d0"/></svg>
<svg class="a" style="left:686.8px;top:418.6px;" width="14.6" height="12.6" viewBox="0 0 14.6 12.6"><rect x="0.5" y="0.5" width="13.4" height="11.6" fill="#141414" stroke="#d4d4d4" stroke-width="1"/><rect x="2.2" y="2.2" width="10" height="8.2" fill="#6a6a6a"/><rect x="5.4" y="4.6" width="5.4" height="4" fill="#9a9a9a" stroke="#1a1a1a" stroke-width="0.9"/></svg>
<svg class="a" style="left:708.9px;top:418.9px;" width="14.4" height="11.2" viewBox="0 0 14.4 11.2"><rect width="14.4" height="11.2" fill="#2dbdf6"/><rect x="1.1" y="1.1" width="2.9" height="2.9" fill="#1c6c9c"/><rect x="7.1" y="1.1" width="2.9" height="2.9" fill="#1c6c9c"/><rect x="4.1" y="4.1" width="2.9" height="2.9" fill="#1c6c9c"/><rect x="10.1" y="4.1" width="2.9" height="2.9" fill="#1c6c9c"/><rect x="1.1" y="7.1" width="2.9" height="2.9" fill="#1c6c9c"/><rect x="7.1" y="7.1" width="2.9" height="2.9" fill="#1c6c9c"/></svg>
<span class="t" style="left:735px;top:419.5px;font-family:'Liberation Sans','Noto Sans CJK JP',sans-serif;font-size:13px;font-weight:400;line-height:13px;color:#c4c4c4;transform:scaleX(0.6532);">アクティブカメラ</span>
<svg class="a" style="left:819.4px;top:423.2px;" width="9" height="5" viewBox="0 0 9 5"><path d="M0 0H9L4.5 5Z" fill="#d0d0d0"/></svg>
<span class="t" style="left:844px;top:419.5px;font-family:'Liberation Sans','Noto Sans CJK JP',sans-serif;font-size:13px;font-weight:400;line-height:13px;color:#c4c4c4;transform:scaleX(0.7600);">1 画面</span>
<div class="a" style="left:0px;top:441px;width:856px;height:281px;background:#262626;"></div>
<div class="a" style="left:114px;top:441px;width:742px;height:27px;background:#1d1d1d;"></div>
<div class="a" style="left:0px;top:441px;width:114px;height:1px;background:#2aa2ec;"></div>
<div class="a" style="left:113px;top:441px;width:1px;height:28px;background:#2aa2ec;"></div>
<div class="a" style="left:113px;top:468px;width:743px;height:1px;background:#2aa2ec;"></div>
<svg class="a" style="left:9.6px;top:452.6px;" width="6" height="6" viewBox="0 0 6 6"><path d="M0.6 0.6L5.2 5.2M5.2 0.6L0.6 5.2" stroke="#b0b0b0" stroke-width="1.1" fill="none"/></svg>
<div class="a" style="left:25px;top:450px;width:10px;height:10px;background:#b09c78;"></div>
<span class="t" style="left:46px;top:448.5px;font-family:'Liberation Sans','Noto Sans CJK JP',sans-serif;font-size:13px;font-weight:400;word-spacing:3px;line-height:13px;color:#d2d2d2;transform:scaleX(0.7191);">コンポ 1</span>
<svg class="a" style="left:97px;top:451px;" width="7" height="9" viewBox="0 0 7 9"><path d="M0 1H6.4M0 4.2H6.4M0 7.4H6.4" stroke="#d6d6d6" stroke-width="1.3"/></svg>
<span class="t" style="left:10px;top:471.6px;font-family:'Liberation Serif','Noto Serif CJK JP',serif;font-size:16px;font-weight:700;line-height:16px;color:#1a82c6;transform:scaleX(1.1530);">0:00:00:21</span>
<span class="t" style="left:12px;top:490.5px;font-family:'Liberation Sans','Noto Sans CJK JP',sans-serif;font-size:11px;font-weight:400;line-height:11px;color:#1a82c6;transform:scaleX(0.8697);">00021 (24.00 fps)</span>
<div class="a" style="left:104px;top:476px;width:359px;height:20px;background:#1d1d1d;"></div>
<svg class="a" style="left:109.9px;top:480px;" width="18" height="12" viewBox="0 0 18 12"><circle cx="6.6" cy="4.6" r="3.9" fill="none" stroke="#c4c4c4" stroke-width="1.3"/><path d="M3.9 7.6L-0.4 11.8" stroke="#c4c4c4" stroke-width="1.5"/><path d="M12.2 8.4H17.2L14.7 11Z" fill="#c4c4c4"/></svg>
<svg class="a" style="left:478px;top:481.4px;" width="16" height="13" viewBox="0 0 16 13"><rect x="0" y="0.6" width="5.6" height="2.8" rx="1" fill="#c0c0c0"/><rect x="10.6" y="0.6" width="5" height="2.8" rx="0.6" fill="#c0c0c0"/><rect x="10.6" y="6" width="5" height="2.8" rx="0.6" fill="#c0c0c0"/><path d="M5 2H11M8.2 2V7.4H11" stroke="#c0c0c0" stroke-width="1" fill="none"/><path d="M12.6 10.6H16L14.3 12.4Z" fill="#c0c0c0"/></svg>
<svg class="a" style="left:510.6px;top:476.8px;" width="18" height="17.5" viewBox="0 0 18 17.5"><g transform="translate(4.4 4.4)"><circle r="1.5" fill="#d8d8d8"/><path d="M0 -1.2V-4.2" transform="rotate(0)" stroke="#d8d8d8" stroke-width="1"/><path d="M0 -1.2V-4.2" transform="rotate(45)" stroke="#d8d8d8" stroke-width="1"/><path d="M0 -1.2V-4.2" transform="rotate(90)" stroke="#d8d8d8" stroke-width="1"/><path d="M0 -1.2V-4.2" transform="rotate(135)" stroke="#d8d8d8" stroke-width="1"/><path d="M0 -1.2V-4.2" transform="rotate(180)" stroke="#d8d8d8" stroke-width="1"/><path d="M0 -1.2V-4.2" transform="rotate(225)" stroke="#d8d8d8" stroke-width="1"/><path d="M0 -1.2V-4.2" transform="rotate(270)" stroke="#d8d8d8" stroke-width="1"/><path d="M0 -1.2V-4.2" transform="rotate(315)" stroke="#d8d8d8" stroke-width="1"/></g><g transform="translate(6.2 5.2)"><path d="M5.8 0.6L11 3.2V8.8L5.8 11.4L0.6 8.8V3.2Z" fill="#484848" stroke="#b8b8b8" stroke-width="1.1" stroke-linejoin="round"/><path d="M0.6 3.2L5.8 5.8L11 3.2M5.8 5.8V11.4" fill="none" stroke="#b8b8b8" stroke-width="1"/></g></svg>
<svg class="a" style="left:545.6px;top:479.8px;" width="16.5" height="13.5" viewBox="0 0 16.5 13.5"><rect x="0" y="7" width="16.4" height="6.2" fill="#727272"/><path d="M2.8 7.2A5.5 7 0 0 1 13.8 7.2Z" fill="#c8c8c8"/><path d="M5 3.6H11.6M8.3 3.6V7" stroke="#2a2a2a" stroke-width="1.2" fill="none"/><path d="M8.3 6.4V11" stroke="#c8c8c8" stroke-width="2.2"/></svg>
<svg class="a" style="left:572.6px;top:478.4px;" width="15" height="14.5" viewBox="0 0 15 14.5"><rect x="0.4" y="3.6" width="9.4" height="10.4" fill="#585858" stroke="#8c8c8c" stroke-width="0.8"/><path d="M1.6 4.4V13.6M8.6 4.4V13.6" stroke="#2a2a2a" stroke-width="1" stroke-dasharray="1.1 1"/><rect x="4.6" y="0.4" width="10" height="11.2" fill="#c4c4c4"/><rect x="7" y="1.6" width="5.2" height="4.2" fill="#606060"/><rect x="7" y="6.8" width="5.2" height="4" fill="#606060"/><path d="M5.8 1V11.4M13.4 1V11.4" stroke="#2a2a2a" stroke-width="1" stroke-dasharray="1.1 1"/></svg>
<svg class="a" style="left:598px;top:478px;" width="15.5" height="15" viewBox="0 0 15.5 15"><circle cx="5.6" cy="9.6" r="4.8" fill="#424242" stroke="#5a5a5a" stroke-width="1"/><circle cx="7" cy="8" r="4.8" fill="#4c4c4c" stroke="#707070" stroke-width="1"/><circle cx="9.6" cy="5.6" r="4.8" fill="#666" stroke="#a8a8a8" stroke-width="1.2"/></svg>
<svg class="a" style="left:632.6px;top:478.4px;" width="16.5" height="16" viewBox="0 0 16.5 16"><rect x="0.0" y="0.8" width="2.5" height="4" fill="#8c8c8c"/><rect x="3.1" y="0.8" width="2.5" height="4" fill="#8c8c8c"/><rect x="6.2" y="0.8" width="2.5" height="4" fill="#8c8c8c"/><rect x="0.0" y="5.8" width="2.5" height="4" fill="#8c8c8c"/><rect x="3.1" y="5.8" width="2.5" height="4" fill="#8c8c8c"/><rect x="6.2" y="5.8" width="2.5" height="4" fill="#8c8c8c"/><rect x="0.0" y="10.8" width="2.5" height="4" fill="#8c8c8c"/><rect x="3.1" y="10.8" width="2.5" height="4" fill="#8c8c8c"/><rect x="6.2" y="10.8" width="2.5" height="4" fill="#8c8c8c"/><circle cx="11.4" cy="6.6" r="4.5" fill="#d4d4d4" stroke="#232323" stroke-width="1"/><path d="M9.2 9.6H13.6L12.8 13H10Z" fill="#d4d4d4"/><rect x="10" y="13" width="2.8" height="2" fill="#a0a0a0"/></svg>
<svg class="a" style="left:658.4px;top:480px;" width="15" height="12.5" viewBox="0 0 15 12.5"><path d="M3 0V2M6.4 0V2M9.8 0V2M13.2 0V2M0 4H1.4M0 7H1.4M0 10H1.4" stroke="#c4c4c4" stroke-width="1"/><rect x="1.2" y="1.6" width="13.2" height="10.2" fill="#646464" stroke="#c4c4c4" stroke-width="1.2"/><path d="M2 3.6C7 3.6 8.6 9.8 13.8 9.8" fill="none" stroke="#b4b4b4" stroke-width="1"/></svg>
<div class="a" style="left:0px;top:504px;width:692px;height:1px;background:#151515;"></div>
<div class="a" style="left:0px;top:505px;width:690px;height:18px;background:#2f2f2f;"></div>
<div class="a" style="left:0px;top:524px;width:690px;height:190px;background:#2f2f2f;"></div>
<div class="a" style="left:691px;top:524px;width:165px;height:190px;background:#2b2b2b;"></div>
<div class="a" style="left:0px;top:523px;width:692px;height:1px;background:#151515;"></div>
<svg class="a" style="left:5px;top:511px;" width="12.4" height="8.4" viewBox="0 0 12.4 8.4"><path d="M0.2 4.2C2.2 0.8 4.4 0.1 6.2 0.1S10.2 0.8 12.2 4.2C10.2 7.6 8 8.3 6.2 8.3S2.2 7.6 0.2 4.2Z" fill="#ababab"/><path d="M2.2 4.2C3.6 2.4 4.8 1.9 6.2 1.9S8.8 2.4 10.2 4.2C8.8 6 7.6 6.5 6.2 6.5S3.6 6 2.2 4.2Z" fill="#444"/><circle cx="6.2" cy="4.2" r="2.5" fill="#161616"/><circle cx="7.3" cy="3.1" r="0.95" fill="#d8d8d8"/></svg>
<svg class="a" style="left:19.8px;top:509px;" width="12" height="10.5" viewBox="0 0 12 10.5"><path d="M0.2 3.2H2.4L6 0.2V10.2L2.4 7.2H0.2Z" fill="#b4b4b4"/><path d="M7.4 3.2Q8.8 5.2 7.4 7.2" stroke="#b4b4b4" stroke-width="1.3" fill="none"/><path d="M9 1.4Q11.8 5.2 9 9" stroke="#b4b4b4" stroke-width="1.3" fill="none"/></svg>
<div class="a" style="left:37px;top:511px;width:7.4px;height:7.4px;border-radius:50%;background:#b0b0b0"></div>
<svg class="a" style="left:50.9px;top:509.6px;" width="8.4" height="10.6" viewBox="0 0 8.4 10.6"><rect x="0" y="4.6" width="8.2" height="5.8" rx="0.5" fill="#b4b4b4"/><path d="M2 5V3.3A2.1 2.3 0 0 1 6.2 3.3V5" stroke="#b4b4b4" stroke-width="1.4" fill="none"/><rect x="3.4" y="6.4" width="1.5" height="2.2" fill="#262626"/></svg>
<svg class="a" style="left:83.2px;top:508.8px;" width="13" height="12.5" viewBox="0 0 13 12.5"><g transform="rotate(-40 6.5 6.2)"><path d="M-0.6 2.6H9L13 6.2L9 9.8H-0.6Z" fill="#b0b0b0"/><circle cx="9.8" cy="6.2" r="1.2" fill="#2a2a2a"/></g></svg>
<span class="t" style="left:105px;top:509px;font-family:'Liberation Sans','Noto Sans CJK JP',sans-serif;font-size:12px;font-weight:400;line-height:12px;color:#a9a9a9;transform:scaleX(1.0467);">#</span>
<span class="t" style="left:140px;top:508.5px;font-family:'Liberation Sans','Noto Sans CJK JP',sans-serif;font-size:13px;font-weight:400;line-height:13px;color:#c0c0c0;transform:scaleX(0.7582);">レイヤー名</span>
<svg class="a" style="left:425.8px;top:509.4px;" width="11.5" height="10" viewBox="0 0 11.5 10"><path d="M0.5 6A5.2 5.9 0 0 1 10.9 6Z" fill="#d4d4d4"/><path d="M2.9 2.9H8.5M5.7 2.9V6" stroke="#222" stroke-width="1.1" fill="none"/><path d="M0 7.2H3.7M7.7 7.2H11.4" stroke="#d4d4d4" stroke-width="1.1"/><path d="M5.7 5.6V9.7" stroke="#d4d4d4" stroke-width="2.3"/></svg>
<svg class="a" style="left:441.5px;top:509.5px;" width="10" height="10" viewBox="0 0 10 10"><g transform="translate(5 5)"><circle r="1.9" fill="none" stroke="#c4c4c4" stroke-width="1"/><path d="M0 -2.8V-4.8" transform="rotate(0)" stroke="#c4c4c4" stroke-width="1"/><path d="M0 -2.8V-4.8" transform="rotate(45)" stroke="#c4c4c4" stroke-width="1"/><path d="M0 -2.8V-4.8" transform="rotate(90)" stroke="#c4c4c4" stroke-width="1"/><path d="M0 -2.8V-4.8" transform="rotate(135)" stroke="#c4c4c4" stroke-width="1"/><path d="M0 -2.8V-4.8" transform="rotate(180)" stroke="#c4c4c4" stroke-width="1"/><path d="M0 -2.8V-4.8" transform="rotate(225)" stroke="#c4c4c4" stroke-width="1"/><path d="M0 -2.8V-4.8" transform="rotate(270)" stroke="#c4c4c4" stroke-width="1"/><path d="M0 -2.8V-4.8" transform="rotate(315)" stroke="#c4c4c4" stroke-width="1"/></g></svg>
<svg class="a" style="left:455.6px;top:509.4px;" width="11" height="10.5" viewBox="0 0 11 10.5"><path d="M0.5 0.5L10.5 10" stroke="#c4c4c4" stroke-width="1.6" stroke-dasharray="1.7 1.2" fill="none"/></svg>
<span class="t" style="left:470.4px;top:506.9px;font-family:'Liberation Sans',sans-serif;font-size:15px;font-weight:400;line-height:15px;color:#cfcfcf;transform:scaleX(0.9596);font-style:italic;-webkit-text-stroke:0.4px #cfcfcf;will-change:transform;">fx</span>
<svg class="a" style="left:485px;top:509px;" width="12.5" height="11.5" viewBox="0 0 12.5 11.5"><rect x="0" y="2" width="9.8" height="9" fill="#bcbcbc"/><rect x="0.9" y="3.15" width="0.9" height="0.9" fill="#111"/><rect x="0.9" y="5.1499999999999995" width="0.9" height="0.9" fill="#111"/><rect x="0.9" y="7.1499999999999995" width="0.9" height="0.9" fill="#111"/><rect x="0.9" y="9.15" width="0.9" height="0.9" fill="#111"/><rect x="3" y="9.6" width="4.6" height="0.8" fill="#444"/><rect x="8" y="9.5" width="0.9" height="0.9" fill="#111"/><rect x="2" y="0" width="9.9" height="8.8" fill="#d4d4d4" stroke="#2f2f2f" stroke-width="0.5"/><rect x="5.2" y="1" width="3.6" height="2.7" fill="#686868"/><rect x="5.2" y="5" width="3.6" height="2.7" fill="#686868"/><rect x="3" y="0.95" width="0.9" height="0.9" fill="#111"/><rect x="10.1" y="0.95" width="0.9" height="0.9" fill="#111"/><rect x="3" y="3.05" width="0.9" height="0.9" fill="#111"/><rect x="10.1" y="3.05" width="0.9" height="0.9" fill="#111"/><rect x="3" y="5.05" width="0.9" height="0.9" fill="#111"/><rect x="10.1" y="5.05" width="0.9" height="0.9" fill="#111"/><rect x="3" y="6.95" width="0.9" height="0.9" fill="#111"/><rect x="10.1" y="6.95" width="0.9" height="0.9" fill="#111"/></svg>
<svg class="a" style="left:500.6px;top:509px;" width="12" height="11.5" viewBox="0 0 12 11.5"><circle cx="4.2" cy="7.4" r="3.4" fill="#4c4c4c" stroke="#787878" stroke-width="1"/><circle cx="5.9" cy="5.7" r="3.4" fill="#545454" stroke="#989898" stroke-width="1"/><circle cx="7.7" cy="3.9" r="3.4" fill="#707070" stroke="#e0e0e0" stroke-width="1.1"/></svg>
<svg class="a" style="left:515.5px;top:508.5px;" width="12" height="12" viewBox="0 0 12 12"><circle cx="6" cy="6" r="5" fill="#fff" stroke="#e8e8e8" stroke-width="1.2"/><path d="M2.46 9.54A5 5 0 0 1 9.54 2.46Z" fill="#000"/></svg>
<svg class="a" style="left:531px;top:509.2px;" width="11.6" height="12" viewBox="0 0 11.6 12"><path d="M5.8 0.6L11 3.2V8.8L5.8 11.4L0.6 8.8V3.2Z" fill="#3c3c3c" stroke="#b4b4b4" stroke-width="1" stroke-linejoin="round"/><path d="M0.6 3.2L5.8 5.8L11 3.2M5.8 5.8V11.4" fill="none" stroke="#b4b4b4" stroke-width="1"/></svg>
<span class="t" style="left:564px;top:508.5px;font-family:'Liberation Sans','Noto Sans CJK JP',sans-serif;font-size:13px;font-weight:400;line-height:13px;color:#c0c0c0;transform:scaleX(0.8451);">親</span>
<div class="a" style="left:67px;top:508px;width:1px;height:13px;background:#111;"></div>
<div class="a" style="left:99px;top:508px;width:1px;height:13px;background:#111;"></div>
<div class="a" style="left:132px;top:508px;width:1px;height:13px;background:#111;"></div>
<div class="a" style="left:420px;top:508px;width:1px;height:13px;background:#111;"></div>
<div class="a" style="left:557px;top:508px;width:1px;height:13px;background:#111;"></div>
<div class="a" style="left:674px;top:508px;width:1px;height:13px;background:#111;"></div>
<div class="a" style="left:0px;top:542px;width:690px;height:1px;background:#232323;"></div>
<div class="a" style="left:691px;top:542px;width:165px;height:1px;background:#222;"></div>
<div class="a" style="left:4px;top:526px;width:13px;height:13px;background:#1a1a1a;"></div>
<svg class="a" style="left:4.6px;top:528.6px;" width="12.4" height="8.4" viewBox="0 0 12.4 8.4"><path d="M0.2 4.2C2.2 0.8 4.4 0.1 6.2 0.1S10.2 0.8 12.2 4.2C10.2 7.6 8 8.3 6.2 8.3S2.2 7.6 0.2 4.2Z" fill="#ababab"/><path d="M2.2 4.2C3.6 2.4 4.8 1.9 6.2 1.9S8.8 2.4 10.2 4.2C8.8 6 7.6 6.5 6.2 6.5S3.6 6 2.2 4.2Z" fill="#444"/><circle cx="6.2" cy="4.2" r="2.5" fill="#161616"/><circle cx="7.3" cy="3.1" r="0.95" fill="#d8d8d8"/></svg>
<div class="a" style="left:34px;top:526px;width:13px;height:13px;background:#1a1a1a;background:linear-gradient(90deg,#191919 0,#191919 2.0px,#202020 2.0px,#202020 2.7px,#191919 2.7px,#191919 4.6px,#202020 4.6px,#202020 5.3px,#191919 5.3px,#191919 7.2px,#202020 7.2px,#202020 7.9px,#191919 7.9px,#191919 9.8px,#202020 9.8px,#202020 10.5px,#191919 10.5px,#191919 12.4px,#202020 12.4px,#202020 13.1px,#191919 13.1px);"></div>
<div class="a" style="left:49px;top:526px;width:13px;height:13px;background:#1a1a1a;background:linear-gradient(90deg,#191919 0,#191919 2.0px,#202020 2.0px,#202020 2.7px,#191919 2.7px,#191919 4.6px,#202020 4.6px,#202020 5.3px,#191919 5.3px,#191919 7.2px,#202020 7.2px,#202020 7.9px,#191919 7.9px,#191919 9.8px,#202020 9.8px,#202020 10.5px,#191919 10.5px,#191919 12.4px,#202020 12.4px,#202020 13.1px,#191919 13.1px);"></div>
<svg class="a" style="left:73px;top:529.4px;" width="7.4" height="7.4" viewBox="0 0 7.4 7.4"><path d="M0 0L7.4 3.7L0 7.4Z" fill="#c4c4c4"/></svg>
<div class="a" style="left:85px;top:526px;width:14px;height:14px;background:#b53a3a;"></div>
<span class="t" style="left:106px;top:528px;font-family:'Liberation Sans','Noto Sans CJK JP',sans-serif;font-size:12px;font-weight:400;line-height:12px;color:#a9a9a9;transform:scaleX(0.8673);">1</span>
<div class="a" style="left:135px;top:525px;width:16px;height:16px;background:#000;"></div>
<div class="a" style="left:136px;top:526px;width:14px;height:14px;background:#fff;"></div>
<span class="t" style="left:156px;top:528px;font-family:'Liberation Sans','Noto Sans CJK JP',sans-serif;font-size:12px;font-weight:400;line-height:12px;color:#a9a9a9;transform:scaleX(0.9990);">adjust</span>
<div class="a" style="left:425px;top:526px;width:13px;height:13px;background:#1a1a1a;"></div>
<div class="a" style="left:455px;top:526px;width:13px;height:13px;background:#1a1a1a;"></div>
<div class="a" style="left:530px;top:526px;width:13px;height:13px;background:#1a1a1a;"></div>
<svg class="a" style="left:425.8px;top:529px;" width="11.5" height="10" viewBox="0 0 11.5 10"><path d="M0.5 6A5.2 5.9 0 0 1 10.9 6Z" fill="#d4d4d4"/><path d="M2.9 2.9H8.5M5.7 2.9V6" stroke="#222" stroke-width="1.1" fill="none"/><path d="M0 7.2H3.7M7.7 7.2H11.4" stroke="#d4d4d4" stroke-width="1.1"/><path d="M5.7 5.6V9.7" stroke="#d4d4d4" stroke-width="2.3"/></svg>
<svg class="a" style="left:455.6px;top:527px;" width="12" height="11" viewBox="0 0 12 11"><path d="M0.6 10.4L11.2 0.6" stroke="#bcbcbc" stroke-width="1.5" fill="none"/></svg>
<div class="a" style="left:470px;top:526px;width:13px;height:13px;background:#1a1a1a;"></div>
<span class="t" style="left:470.4px;top:525.5px;font-family:'Liberation Sans',sans-serif;font-size:15px;font-weight:400;line-height:15px;color:#cfcfcf;transform:scaleX(0.9596);font-style:italic;-webkit-text-stroke:0.4px #cfcfcf;will-change:transform;">fx</span>
<div class="a" style="left:440px;top:526px;width:13px;height:13px;background:#1a1a1a;background:linear-gradient(90deg,#191919 0,#191919 2.0px,#202020 2.0px,#202020 2.7px,#191919 2.7px,#191919 4.6px,#202020 4.6px,#202020 5.3px,#191919 5.3px,#191919 7.2px,#202020 7.2px,#202020 7.9px,#191919 7.9px,#191919 9.8px,#202020 9.8px,#202020 10.5px,#191919 10.5px,#191919 12.4px,#202020 12.4px,#202020 13.1px,#191919 13.1px);"></div>
<div class="a" style="left:500px;top:526px;width:13px;height:13px;background:#1a1a1a;background:linear-gradient(90deg,#191919 0,#191919 2.0px,#202020 2.0px,#202020 2.7px,#191919 2.7px,#191919 4.6px,#202020 4.6px,#202020 5.3px,#191919 5.3px,#191919 7.2px,#202020 7.2px,#202020 7.9px,#191919 7.9px,#191919 9.8px,#202020 9.8px,#202020 10.5px,#191919 10.5px,#191919 12.4px,#202020 12.4px,#202020 13.1px,#191919 13.1px);"></div>
<div class="a" style="left:515px;top:526px;width:13px;height:13px;background:#1a1a1a;background:linear-gradient(90deg,#191919 0,#191919 2.0px,#202020 2.0px,#202020 2.7px,#191919 2.7px,#191919 4.6px,#202020 4.6px,#202020 5.3px,#191919 5.3px,#191919 7.2px,#202020 7.2px,#202020 7.9px,#191919 7.9px,#191919 9.8px,#202020 9.8px,#202020 10.5px,#191919 10.5px,#191919 12.4px,#202020 12.4px,#202020 13.1px,#191919 13.1px);"></div>
<svg class="a" style="left:531px;top:527px;" width="11.6" height="12" viewBox="0 0 11.6 12"><path d="M5.8 0.6L11 3.2V8.8L5.8 11.4L0.6 8.8V3.2Z" fill="#3c3c3c" stroke="#b4b4b4" stroke-width="1" stroke-linejoin="round"/><path d="M0.6 3.2L5.8 5.8L11 3.2M5.8 5.8V11.4" fill="none" stroke="#b4b4b4" stroke-width="1"/></svg>
<svg class="a" style="left:562px;top:526.4px;" width="12" height="12" viewBox="0 0 12 12"><path d="M9.60 3.48L9.87 3.90L10.08 4.35L10.24 4.82L10.35 5.31L10.40 5.81L10.39 6.31L10.33 6.80L10.21 7.29L10.04 7.75L9.81 8.20L9.54 8.62L9.22 9.00L8.86 9.35L8.46 9.65L8.03 9.90L7.58 10.11L7.10 10.26L6.61 10.36L6.12 10.40L5.62 10.38L5.12 10.31L4.64 10.18L4.18 10.00L3.73 9.77L3.32 9.49L2.94 9.17L2.60 8.80L2.31 8.40L2.06 7.96L1.87 7.50L1.72 7.03L1.63 6.54L1.60 6.04L1.62 5.54L1.70 5.05L1.84 4.57L2.03 4.11L2.27 3.67L2.56 3.26L2.89 2.89L3.26 2.56L3.67 2.27L4.11 2.04L4.58 1.89L5.08 1.83L5.56 1.86L6.04 1.96L6.47 2.14L6.87 2.38L7.22 2.66L7.51 2.98L7.74 3.32L7.91 3.68L8.04 4.03L8.12 4.37L8.16 4.70L8.18 5.01L8.17 5.29L8.16 5.56L8.15 5.81L8.15 6.06L8.13 6.30L8.08 6.54L8.01 6.77L7.91 6.99L7.78 7.20L7.63 7.40L7.47 7.57L7.28 7.73L7.07 7.86L6.86 7.97L6.63 8.06L6.39 8.11L6.15 8.14L5.91 8.15L5.66 8.12L5.43 8.07L5.19 7.99L4.97 7.89L4.77 7.76L4.58 7.61L4.40 7.44L4.25 7.25L4.12 7.04L4.01 6.82L3.93 6.59L3.88 6.35L3.85 6.11L3.85 5.87L3.88 5.63L3.94 5.39L4.02 5.16L4.13 4.94L4.26 4.74L4.41 4.55L4.59 4.38L4.78 4.23L5.01 4.13L5.26 4.13L5.51 4.16L5.73 4.22L5.94 4.31L6.12 4.42L6.28 4.54L6.41 4.69L6.52 4.84L6.59 4.99L6.64 5.15L6.66 5.31L6.65 5.45" fill="none" stroke="#c0c0c0" stroke-width="1.25" stroke-linecap="round" stroke-linejoin="round"/></svg>
<div class="a" style="left:580px;top:524px;width:91px;height:18px;background:#1d1d1d;"></div>
<span class="t" style="left:587px;top:525.5px;font-family:'Liberation Sans','Noto Sans CJK JP',sans-serif;font-size:13px;font-weight:400;line-height:13px;color:#c8c8c8;transform:scaleX(0.7303);">なし</span>
<svg class="a" style="left:657.4px;top:530.4px;" width="9" height="5" viewBox="0 0 9 5"><path d="M0 0H9L4.5 5Z" fill="#d0d0d0"/></svg>
<div class="a" style="left:698px;top:525px;width:158px;height:16px;background:#7a3a3a;box-shadow:inset 0 0 0 1px rgba(255,255,255,0.04);"></div>
<div class="a" style="left:0px;top:561px;width:690px;height:1px;background:#232323;"></div>
<div class="a" style="left:691px;top:561px;width:165px;height:1px;background:#222;"></div>
<div class="a" style="left:4px;top:545px;width:13px;height:13px;background:#1a1a1a;"></div>
<svg class="a" style="left:4.6px;top:547.6px;" width="12.4" height="8.4" viewBox="0 0 12.4 8.4"><path d="M0.2 4.2C2.2 0.8 4.4 0.1 6.2 0.1S10.2 0.8 12.2 4.2C10.2 7.6 8 8.3 6.2 8.3S2.2 7.6 0.2 4.2Z" fill="#ababab"/><path d="M2.2 4.2C3.6 2.4 4.8 1.9 6.2 1.9S8.8 2.4 10.2 4.2C8.8 6 7.6 6.5 6.2 6.5S3.6 6 2.2 4.2Z" fill="#444"/><circle cx="6.2" cy="4.2" r="2.5" fill="#161616"/><circle cx="7.3" cy="3.1" r="0.95" fill="#d8d8d8"/></svg>
<div class="a" style="left:34px;top:545px;width:13px;height:13px;background:#1a1a1a;background:linear-gradient(90deg,#191919 0,#191919 2.0px,#202020 2.0px,#202020 2.7px,#191919 2.7px,#191919 4.6px,#202020 4.6px,#202020 5.3px,#191919 5.3px,#191919 7.2px,#202020 7.2px,#202020 7.9px,#191919 7.9px,#191919 9.8px,#202020 9.8px,#202020 10.5px,#191919 10.5px,#191919 12.4px,#202020 12.4px,#202020 13.1px,#191919 13.1px);"></div>
<div class="a" style="left:49px;top:545px;width:13px;height:13px;background:#1a1a1a;background:linear-gradient(90deg,#191919 0,#191919 2.0px,#202020 2.0px,#202020 2.7px,#191919 2.7px,#191919 4.6px,#202020 4.6px,#202020 5.3px,#191919 5.3px,#191919 7.2px,#202020 7.2px,#202020 7.9px,#191919 7.9px,#191919 9.8px,#202020 9.8px,#202020 10.5px,#191919 10.5px,#191919 12.4px,#202020 12.4px,#202020 13.1px,#191919 13.1px);"></div>
<svg class="a" style="left:73px;top:548.4px;" width="7.4" height="7.4" viewBox="0 0 7.4 7.4"><path d="M0 0L7.4 3.7L0 7.4Z" fill="#c4c4c4"/></svg>
<div class="a" style="left:85px;top:545px;width:14px;height:14px;background:#e4d84e;"></div>
<span class="t" style="left:106px;top:547px;font-family:'Liberation Sans','Noto Sans CJK JP',sans-serif;font-size:12px;font-weight:400;line-height:12px;color:#a9a9a9;transform:scaleX(0.8673);">2</span>
<svg class="a" style="left:136px;top:545px;" width="15" height="13" viewBox="0 0 15 13"><rect x="0.4" y="0.4" width="14.2" height="12.2" fill="#1c1c1c"/><rect x="1" y="1.6" width="13" height="9.8" fill="url(#skyg)"/><path d="M1.6 3H6.4V3.9H1.6Z" fill="#3f8fe0" opacity="0.8"/><path d="M1.4 7.6L2.4 5.6L3.4 6.8L4.2 5.2L5.4 7L6.6 6.4L7.8 7.2L10 6.8L12.6 7.4V8.2H1.4Z" fill="#2f6e50"/><path d="M2 9.4H11" stroke="#a8d0ec" stroke-width="0.5" opacity="0.7"/><rect x="3.4" y="1" width="8.2" height="0.9" fill="#fff"/><rect x="3.4" y="11.1" width="8.2" height="0.9" fill="#fff"/><path d="M0 0H4.2L0 4.2ZM15 0H10.8L15 4.2ZM0 13H4.2L0 8.8ZM15 13H10.8L15 8.8Z" fill="#3f90da"/></svg>
<span class="t" style="left:156px;top:547px;font-family:'Liberation Sans','Noto Sans CJK JP',sans-serif;font-size:12px;font-weight:400;line-height:12px;color:#a9a9a9;transform:scaleX(0.9538);">[man_01.png]</span>
<div class="a" style="left:425px;top:545px;width:13px;height:13px;background:#1a1a1a;"></div>
<div class="a" style="left:455px;top:545px;width:13px;height:13px;background:#1a1a1a;"></div>
<div class="a" style="left:530px;top:545px;width:13px;height:13px;background:#1a1a1a;"></div>
<svg class="a" style="left:425.8px;top:548px;" width="11.5" height="10" viewBox="0 0 11.5 10"><path d="M0.5 6A5.2 5.9 0 0 1 10.9 6Z" fill="#d4d4d4"/><path d="M2.9 2.9H8.5M5.7 2.9V6" stroke="#222" stroke-width="1.1" fill="none"/><path d="M0 7.2H3.7M7.7 7.2H11.4" stroke="#d4d4d4" stroke-width="1.1"/><path d="M5.7 5.6V9.7" stroke="#d4d4d4" stroke-width="2.3"/></svg>
<svg class="a" style="left:455.6px;top:546px;" width="12" height="11" viewBox="0 0 12 11"><path d="M0.6 10.4L11.2 0.6" stroke="#bcbcbc" stroke-width="1.5" fill="none"/></svg>
<div class="a" style="left:470px;top:545px;width:13px;height:13px;background:#1a1a1a;"></div>
<span class="t" style="left:470.4px;top:544.5px;font-family:'Liberation Sans',sans-serif;font-size:15px;font-weight:400;line-height:15px;color:#cfcfcf;transform:scaleX(0.9596);font-style:italic;-webkit-text-stroke:0.4px #cfcfcf;will-change:transform;">fx</span>
<div class="a" style="left:500px;top:545px;width:13px;height:13px;background:#1a1a1a;background:linear-gradient(90deg,#191919 0,#191919 2.0px,#202020 2.0px,#202020 2.7px,#191919 2.7px,#191919 4.6px,#202020 4.6px,#202020 5.3px,#191919 5.3px,#191919 7.2px,#202020 7.2px,#202020 7.9px,#191919 7.9px,#191919 9.8px,#202020 9.8px,#202020 10.5px,#191919 10.5px,#191919 12.4px,#202020 12.4px,#202020 13.1px,#191919 13.1px);"></div>
<div class="a" style="left:515px;top:545px;width:13px;height:13px;background:#1a1a1a;background:linear-gradient(90deg,#191919 0,#191919 2.0px,#202020 2.0px,#202020 2.7px,#191919 2.7px,#191919 4.6px,#202020 4.6px,#202020 5.3px,#191919 5.3px,#191919 7.2px,#202020 7.2px,#202020 7.9px,#191919 7.9px,#191919 9.8px,#202020 9.8px,#202020 10.5px,#191919 10.5px,#191919 12.4px,#202020 12.4px,#202020 13.1px,#191919 13.1px);"></div>
<svg class="a" style="left:531px;top:546px;" width="11.6" height="12" viewBox="0 0 11.6 12"><path d="M5.8 0.6L11 3.2V8.8L5.8 11.4L0.6 8.8V3.2Z" fill="#3c3c3c" stroke="#b4b4b4" stroke-width="1" stroke-linejoin="round"/><path d="M0.6 3.2L5.8 5.8L11 3.2M5.8 5.8V11.4" fill="none" stroke="#b4b4b4" stroke-width="1"/></svg>
<svg class="a" style="left:562px;top:545.4px;" width="12" height="12" viewBox="0 0 12 12"><path d="M9.60 3.48L9.87 3.90L10.08 4.35L10.24 4.82L10.35 5.31L10.40 5.81L10.39 6.31L10.33 6.80L10.21 7.29L10.04 7.75L9.81 8.20L9.54 8.62L9.22 9.00L8.86 9.35L8.46 9.65L8.03 9.90L7.58 10.11L7.10 10.26L6.61 10.36L6.12 10.40L5.62 10.38L5.12 10.31L4.64 10.18L4.18 10.00L3.73 9.77L3.32 9.49L2.94 9.17L2.60 8.80L2.31 8.40L2.06 7.96L1.87 7.50L1.72 7.03L1.63 6.54L1.60 6.04L1.62 5.54L1.70 5.05L1.84 4.57L2.03 4.11L2.27 3.67L2.56 3.26L2.89 2.89L3.26 2.56L3.67 2.27L4.11 2.04L4.58 1.89L5.08 1.83L5.56 1.86L6.04 1.96L6.47 2.14L6.87 2.38L7.22 2.66L7.51 2.98L7.74 3.32L7.91 3.68L8.04 4.03L8.12 4.37L8.16 4.70L8.18 5.01L8.17 5.29L8.16 5.56L8.15 5.81L8.15 6.06L8.13 6.30L8.08 6.54L8.01 6.77L7.91 6.99L7.78 7.20L7.63 7.40L7.47 7.57L7.28 7.73L7.07 7.86L6.86 7.97L6.63 8.06L6.39 8.11L6.15 8.14L5.91 8.15L5.66 8.12L5.43 8.07L5.19 7.99L4.97 7.89L4.77 7.76L4.58 7.61L4.40 7.44L4.25 7.25L4.12 7.04L4.01 6.82L3.93 6.59L3.88 6.35L3.85 6.11L3.85 5.87L3.88 5.63L3.94 5.39L4.02 5.16L4.13 4.94L4.26 4.74L4.41 4.55L4.59 4.38L4.78 4.23L5.01 4.13L5.26 4.13L5.51 4.16L5.73 4.22L5.94 4.31L6.12 4.42L6.28 4.54L6.41 4.69L6.52 4.84L6.59 4.99L6.64 5.15L6.66 5.31L6.65 5.45" fill="none" stroke="#c0c0c0" stroke-width="1.25" stroke-linecap="round" stroke-linejoin="round"/></svg>
<div class="a" style="left:580px;top:543px;width:91px;height:18px;background:#1d1d1d;"></div>
<span class="t" style="left:587px;top:544.5px;font-family:'Liberation Sans','Noto Sans CJK JP',sans-serif;font-size:13px;font-weight:400;line-height:13px;color:#c8c8c8;transform:scaleX(0.7303);">なし</span>
<svg class="a" style="left:657.4px;top:549.4px;" width="9" height="5" viewBox="0 0 9 5"><path d="M0 0H9L4.5 5Z" fill="#d0d0d0"/></svg>
<div class="a" style="left:698px;top:544px;width:158px;height:16px;background:#948a46;box-shadow:inset 0 0 0 1px rgba(255,255,255,0.04);"></div>
<div class="a" style="left:0px;top:580px;width:690px;height:1px;background:#232323;"></div>
<div class="a" style="left:691px;top:580px;width:165px;height:1px;background:#222;"></div>
<div class="a" style="left:4px;top:564px;width:13px;height:13px;background:#1a1a1a;"></div>
<svg class="a" style="left:4.6px;top:566.6px;" width="12.4" height="8.4" viewBox="0 0 12.4 8.4"><path d="M0.2 4.2C2.2 0.8 4.4 0.1 6.2 0.1S10.2 0.8 12.2 4.2C10.2 7.6 8 8.3 6.2 8.3S2.2 7.6 0.2 4.2Z" fill="#ababab"/><path d="M2.2 4.2C3.6 2.4 4.8 1.9 6.2 1.9S8.8 2.4 10.2 4.2C8.8 6 7.6 6.5 6.2 6.5S3.6 6 2.2 4.2Z" fill="#444"/><circle cx="6.2" cy="4.2" r="2.5" fill="#161616"/><circle cx="7.3" cy="3.1" r="0.95" fill="#d8d8d8"/></svg>
<div class="a" style="left:34px;top:564px;width:13px;height:13px;background:#1a1a1a;background:linear-gradient(90deg,#191919 0,#191919 2.0px,#202020 2.0px,#202020 2.7px,#191919 2.7px,#191919 4.6px,#202020 4.6px,#202020 5.3px,#191919 5.3px,#191919 7.2px,#202020 7.2px,#202020 7.9px,#191919 7.9px,#191919 9.8px,#202020 9.8px,#202020 10.5px,#191919 10.5px,#191919 12.4px,#202020 12.4px,#202020 13.1px,#191919 13.1px);"></div>
<div class="a" style="left:49px;top:564px;width:13px;height:13px;background:#1a1a1a;background:linear-gradient(90deg,#191919 0,#191919 2.0px,#202020 2.0px,#202020 2.7px,#191919 2.7px,#191919 4.6px,#202020 4.6px,#202020 5.3px,#191919 5.3px,#191919 7.2px,#202020 7.2px,#202020 7.9px,#191919 7.9px,#191919 9.8px,#202020 9.8px,#202020 10.5px,#191919 10.5px,#191919 12.4px,#202020 12.4px,#202020 13.1px,#191919 13.1px);"></div>
<svg class="a" style="left:73px;top:567.4px;" width="7.4" height="7.4" viewBox="0 0 7.4 7.4"><path d="M0 0L7.4 3.7L0 7.4Z" fill="#c4c4c4"/></svg>
<div class="a" style="left:85px;top:564px;width:14px;height:14px;background:#e4d84e;"></div>
<span class="t" style="left:106px;top:566px;font-family:'Liberation Sans','Noto Sans CJK JP',sans-serif;font-size:12px;font-weight:400;line-height:12px;color:#a9a9a9;transform:scaleX(0.8673);">3</span>
<svg class="a" style="left:136px;top:564px;" width="15" height="13" viewBox="0 0 15 13"><rect x="0.4" y="0.4" width="14.2" height="12.2" fill="#1c1c1c"/><rect x="1" y="1.6" width="13" height="9.8" fill="url(#skyg)"/><path d="M1.6 3H6.4V3.9H1.6Z" fill="#3f8fe0" opacity="0.8"/><path d="M1.4 7.6L2.4 5.6L3.4 6.8L4.2 5.2L5.4 7L6.6 6.4L7.8 7.2L10 6.8L12.6 7.4V8.2H1.4Z" fill="#2f6e50"/><path d="M2 9.4H11" stroke="#a8d0ec" stroke-width="0.5" opacity="0.7"/><rect x="3.4" y="1" width="8.2" height="0.9" fill="#fff"/><rect x="3.4" y="11.1" width="8.2" height="0.9" fill="#fff"/><path d="M0 0H4.2L0 4.2ZM15 0H10.8L15 4.2ZM0 13H4.2L0 8.8ZM15 13H10.8L15 8.8Z" fill="#3f90da"/></svg>
<span class="t" style="left:156px;top:566px;font-family:'Liberation Sans','Noto Sans CJK JP',sans-serif;font-size:12px;font-weight:400;line-height:12px;color:#a9a9a9;transform:scaleX(0.9538);">[man_02.png]</span>
<div class="a" style="left:425px;top:564px;width:13px;height:13px;background:#1a1a1a;"></div>
<div class="a" style="left:455px;top:564px;width:13px;height:13px;background:#1a1a1a;"></div>
<div class="a" style="left:530px;top:564px;width:13px;height:13px;background:#1a1a1a;"></div>
<svg class="a" style="left:425.8px;top:567px;" width="11.5" height="10" viewBox="0 0 11.5 10"><path d="M0.5 6A5.2 5.9 0 0 1 10.9 6Z" fill="#d4d4d4"/><path d="M2.9 2.9H8.5M5.7 2.9V6" stroke="#222" stroke-width="1.1" fill="none"/><path d="M0 7.2H3.7M7.7 7.2H11.4" stroke="#d4d4d4" stroke-width="1.1"/><path d="M5.7 5.6V9.7" stroke="#d4d4d4" stroke-width="2.3"/></svg>
<svg class="a" style="left:455.6px;top:565px;" width="12" height="11" viewBox="0 0 12 11"><path d="M0.6 10.4L11.2 0.6" stroke="#bcbcbc" stroke-width="1.5" fill="none"/></svg>
<div class="a" style="left:500px;top:564px;width:13px;height:13px;background:#1a1a1a;background:linear-gradient(90deg,#191919 0,#191919 2.0px,#202020 2.0px,#202020 2.7px,#191919 2.7px,#191919 4.6px,#202020 4.6px,#202020 5.3px,#191919 5.3px,#191919 7.2px,#202020 7.2px,#202020 7.9px,#191919 7.9px,#191919 9.8px,#202020 9.8px,#202020 10.5px,#191919 10.5px,#191919 12.4px,#202020 12.4px,#202020 13.1px,#191919 13.1px);"></div>
<div class="a" style="left:515px;top:564px;width:13px;height:13px;background:#1a1a1a;background:linear-gradient(90deg,#191919 0,#191919 2.0px,#202020 2.0px,#202020 2.7px,#191919 2.7px,#191919 4.6px,#202020 4.6px,#202020 5.3px,#191919 5.3px,#191919 7.2px,#202020 7.2px,#202020 7.9px,#191919 7.9px,#191919 9.8px,#202020 9.8px,#202020 10.5px,#191919 10.5px,#191919 12.4px,#202020 12.4px,#202020 13.1px,#191919 13.1px);"></div>
<svg class="a" style="left:531px;top:565px;" width="11.6" height="12" viewBox="0 0 11.6 12"><path d="M5.8 0.6L11 3.2V8.8L5.8 11.4L0.6 8.8V3.2Z" fill="#3c3c3c" stroke="#b4b4b4" stroke-width="1" stroke-linejoin="round"/><path d="M0.6 3.2L5.8 5.8L11 3.2M5.8 5.8V11.4" fill="none" stroke="#b4b4b4" stroke-width="1"/></svg>
<svg class="a" style="left:562px;top:564.4px;" width="12" height="12" viewBox="0 0 12 12"><path d="M9.60 3.48L9.87 3.90L10.08 4.35L10.24 4.82L10.35 5.31L10.40 5.81L10.39 6.31L10.33 6.80L10.21 7.29L10.04 7.75L9.81 8.20L9.54 8.62L9.22 9.00L8.86 9.35L8.46 9.65L8.03 9.90L7.58 10.11L7.10 10.26L6.61 10.36L6.12 10.40L5.62 10.38L5.12 10.31L4.64 10.18L4.18 10.00L3.73 9.77L3.32 9.49L2.94 9.17L2.60 8.80L2.31 8.40L2.06 7.96L1.87 7.50L1.72 7.03L1.63 6.54L1.60 6.04L1.62 5.54L1.70 5.05L1.84 4.57L2.03 4.11L2.27 3.67L2.56 3.26L2.89 2.89L3.26 2.56L3.67 2.27L4.11 2.04L4.58 1.89L5.08 1.83L5.56 1.86L6.04 1.96L6.47 2.14L6.87 2.38L7.22 2.66L7.51 2.98L7.74 3.32L7.91 3.68L8.04 4.03L8.12 4.37L8.16 4.70L8.18 5.01L8.17 5.29L8.16 5.56L8.15 5.81L8.15 6.06L8.13 6.30L8.08 6.54L8.01 6.77L7.91 6.99L7.78 7.20L7.63 7.40L7.47 7.57L7.28 7.73L7.07 7.86L6.86 7.97L6.63 8.06L6.39 8.11L6.15 8.14L5.91 8.15L5.66 8.12L5.43 8.07L5.19 7.99L4.97 7.89L4.77 7.76L4.58 7.61L4.40 7.44L4.25 7.25L4.12 7.04L4.01 6.82L3.93 6.59L3.88 6.35L3.85 6.11L3.85 5.87L3.88 5.63L3.94 5.39L4.02 5.16L4.13 4.94L4.26 4.74L4.41 4.55L4.59 4.38L4.78 4.23L5.01 4.13L5.26 4.13L5.51 4.16L5.73 4.22L5.94 4.31L6.12 4.42L6.28 4.54L6.41 4.69L6.52 4.84L6.59 4.99L6.64 5.15L6.66 5.31L6.65 5.45" fill="none" stroke="#c0c0c0" stroke-width="1.25" stroke-linecap="round" stroke-linejoin="round"/></svg>
<div class="a" style="left:580px;top:562px;width:91px;height:18px;background:#1d1d1d;"></div>
<span class="t" style="left:587px;top:563.5px;font-family:'Liberation Sans','Noto Sans CJK JP',sans-serif;font-size:13px;font-weight:400;line-height:13px;color:#c8c8c8;transform:scaleX(0.7303);">なし</span>
<svg class="a" style="left:657.4px;top:568.4px;" width="9" height="5" viewBox="0 0 9 5"><path d="M0 0H9L4.5 5Z" fill="#d0d0d0"/></svg>
<div class="a" style="left:698px;top:563px;width:158px;height:16px;background:#948a46;box-shadow:inset 0 0 0 1px rgba(255,255,255,0.04);"></div>
<div class="a" style="left:0px;top:599px;width:690px;height:1px;background:#232323;"></div>
<div class="a" style="left:691px;top:599px;width:165px;height:1px;background:#222;"></div>
<div class="a" style="left:4px;top:583px;width:13px;height:13px;background:#1a1a1a;"></div>
<svg class="a" style="left:4.6px;top:585.6px;" width="12.4" height="8.4" viewBox="0 0 12.4 8.4"><path d="M0.2 4.2C2.2 0.8 4.4 0.1 6.2 0.1S10.2 0.8 12.2 4.2C10.2 7.6 8 8.3 6.2 8.3S2.2 7.6 0.2 4.2Z" fill="#ababab"/><path d="M2.2 4.2C3.6 2.4 4.8 1.9 6.2 1.9S8.8 2.4 10.2 4.2C8.8 6 7.6 6.5 6.2 6.5S3.6 6 2.2 4.2Z" fill="#444"/><circle cx="6.2" cy="4.2" r="2.5" fill="#161616"/><circle cx="7.3" cy="3.1" r="0.95" fill="#d8d8d8"/></svg>
<div class="a" style="left:34px;top:583px;width:13px;height:13px;background:#1a1a1a;background:linear-gradient(90deg,#191919 0,#191919 2.0px,#202020 2.0px,#202020 2.7px,#191919 2.7px,#191919 4.6px,#202020 4.6px,#202020 5.3px,#191919 5.3px,#191919 7.2px,#202020 7.2px,#202020 7.9px,#191919 7.9px,#191919 9.8px,#202020 9.8px,#202020 10.5px,#191919 10.5px,#191919 12.4px,#202020 12.4px,#202020 13.1px,#191919 13.1px);"></div>
<div class="a" style="left:49px;top:583px;width:13px;height:13px;background:#1a1a1a;background:linear-gradient(90deg,#191919 0,#191919 2.0px,#202020 2.0px,#202020 2.7px,#191919 2.7px,#191919 4.6px,#202020 4.6px,#202020 5.3px,#191919 5.3px,#191919 7.2px,#202020 7.2px,#202020 7.9px,#191919 7.9px,#191919 9.8px,#202020 9.8px,#202020 10.5px,#191919 10.5px,#191919 12.4px,#202020 12.4px,#202020 13.1px,#191919 13.1px);"></div>
<svg class="a" style="left:73px;top:586.4px;" width="7.4" height="7.4" viewBox="0 0 7.4 7.4"><path d="M0 0L7.4 3.7L0 7.4Z" fill="#c4c4c4"/></svg>
<div class="a" style="left:85px;top:583px;width:14px;height:14px;background:#e4d84e;"></div>
<span class="t" style="left:106px;top:585px;font-family:'Liberation Sans','Noto Sans CJK JP',sans-serif;font-size:12px;font-weight:400;line-height:12px;color:#a9a9a9;transform:scaleX(0.8673);">4</span>
<svg class="a" style="left:136px;top:583px;" width="15" height="13" viewBox="0 0 15 13"><rect x="0.4" y="0.4" width="14.2" height="12.2" fill="#1c1c1c"/><rect x="1" y="1.6" width="13" height="9.8" fill="url(#skyg)"/><path d="M1.6 3H6.4V3.9H1.6Z" fill="#3f8fe0" opacity="0.8"/><path d="M1.4 7.6L2.4 5.6L3.4 6.8L4.2 5.2L5.4 7L6.6 6.4L7.8 7.2L10 6.8L12.6 7.4V8.2H1.4Z" fill="#2f6e50"/><path d="M2 9.4H11" stroke="#a8d0ec" stroke-width="0.5" opacity="0.7"/><rect x="3.4" y="1" width="8.2" height="0.9" fill="#fff"/><rect x="3.4" y="11.1" width="8.2" height="0.9" fill="#fff"/><path d="M0 0H4.2L0 4.2ZM15 0H10.8L15 4.2ZM0 13H4.2L0 8.8ZM15 13H10.8L15 8.8Z" fill="#3f90da"/></svg>
<span class="t" style="left:156px;top:585px;font-family:'Liberation Sans','Noto Sans CJK JP',sans-serif;font-size:12px;font-weight:400;line-height:12px;color:#a9a9a9;transform:scaleX(0.9538);">[man_03.png]</span>
<div class="a" style="left:425px;top:583px;width:13px;height:13px;background:#1a1a1a;"></div>
<div class="a" style="left:455px;top:583px;width:13px;height:13px;background:#1a1a1a;"></div>
<div class="a" style="left:530px;top:583px;width:13px;height:13px;background:#1a1a1a;"></div>
<svg class="a" style="left:425.8px;top:586px;" width="11.5" height="10" viewBox="0 0 11.5 10"><path d="M0.5 6A5.2 5.9 0 0 1 10.9 6Z" fill="#d4d4d4"/><path d="M2.9 2.9H8.5M5.7 2.9V6" stroke="#222" stroke-width="1.1" fill="none"/><path d="M0 7.2H3.7M7.7 7.2H11.4" stroke="#d4d4d4" stroke-width="1.1"/><path d="M5.7 5.6V9.7" stroke="#d4d4d4" stroke-width="2.3"/></svg>
<svg class="a" style="left:455.6px;top:584px;" width="12" height="11" viewBox="0 0 12 11"><path d="M0.6 10.4L11.2 0.6" stroke="#bcbcbc" stroke-width="1.5" fill="none"/></svg>
<div class="a" style="left:500px;top:583px;width:13px;height:13px;background:#1a1a1a;background:linear-gradient(90deg,#191919 0,#191919 2.0px,#202020 2.0px,#202020 2.7px,#191919 2.7px,#191919 4.6px,#202020 4.6px,#202020 5.3px,#191919 5.3px,#191919 7.2px,#202020 7.2px,#202020 7.9px,#191919 7.9px,#191919 9.8px,#202020 9.8px,#202020 10.5px,#191919 10.5px,#191919 12.4px,#202020 12.4px,#202020 13.1px,#191919 13.1px);"></div>
<div class="a" style="left:515px;top:583px;width:13px;height:13px;background:#1a1a1a;background:linear-gradient(90deg,#191919 0,#191919 2.0px,#202020 2.0px,#202020 2.7px,#191919 2.7px,#191919 4.6px,#202020 4.6px,#202020 5.3px,#191919 5.3px,#191919 7.2px,#202020 7.2px,#202020 7.9px,#191919 7.9px,#191919 9.8px,#202020 9.8px,#202020 10.5px,#191919 10.5px,#191919 12.4px,#202020 12.4px,#202020 13.1px,#191919 13.1px);"></div>
<svg class="a" style="left:531px;top:584px;" width="11.6" height="12" viewBox="0 0 11.6 12"><path d="M5.8 0.6L11 3.2V8.8L5.8 11.4L0.6 8.8V3.2Z" fill="#3c3c3c" stroke="#b4b4b4" stroke-width="1" stroke-linejoin="round"/><path d="M0.6 3.2L5.8 5.8L11 3.2M5.8 5.8V11.4" fill="none" stroke="#b4b4b4" stroke-width="1"/></svg>
<svg class="a" style="left:562px;top:583.4px;" width="12" height="12" viewBox="0 0 12 12"><path d="M9.60 3.48L9.87 3.90L10.08 4.35L10.24 4.82L10.35 5.31L10.40 5.81L10.39 6.31L10.33 6.80L10.21 7.29L10.04 7.75L9.81 8.20L9.54 8.62L9.22 9.00L8.86 9.35L8.46 9.65L8.03 9.90L7.58 10.11L7.10 10.26L6.61 10.36L6.12 10.40L5.62 10.38L5.12 10.31L4.64 10.18L4.18 10.00L3.73 9.77L3.32 9.49L2.94 9.17L2.60 8.80L2.31 8.40L2.06 7.96L1.87 7.50L1.72 7.03L1.63 6.54L1.60 6.04L1.62 5.54L1.70 5.05L1.84 4.57L2.03 4.11L2.27 3.67L2.56 3.26L2.89 2.89L3.26 2.56L3.67 2.27L4.11 2.04L4.58 1.89L5.08 1.83L5.56 1.86L6.04 1.96L6.47 2.14L6.87 2.38L7.22 2.66L7.51 2.98L7.74 3.32L7.91 3.68L8.04 4.03L8.12 4.37L8.16 4.70L8.18 5.01L8.17 5.29L8.16 5.56L8.15 5.81L8.15 6.06L8.13 6.30L8.08 6.54L8.01 6.77L7.91 6.99L7.78 7.20L7.63 7.40L7.47 7.57L7.28 7.73L7.07 7.86L6.86 7.97L6.63 8.06L6.39 8.11L6.15 8.14L5.91 8.15L5.66 8.12L5.43 8.07L5.19 7.99L4.97 7.89L4.77 7.76L4.58 7.61L4.40 7.44L4.25 7.25L4.12 7.04L4.01 6.82L3.93 6.59L3.88 6.35L3.85 6.11L3.85 5.87L3.88 5.63L3.94 5.39L4.02 5.16L4.13 4.94L4.26 4.74L4.41 4.55L4.59 4.38L4.78 4.23L5.01 4.13L5.26 4.13L5.51 4.16L5.73 4.22L5.94 4.31L6.12 4.42L6.28 4.54L6.41 4.69L6.52 4.84L6.59 4.99L6.64 5.15L6.66 5.31L6.65 5.45" fill="none" stroke="#c0c0c0" stroke-width="1.25" stroke-linecap="round" stroke-linejoin="round"/></svg>
<div class="a" style="left:580px;top:581px;width:91px;height:18px;background:#1d1d1d;"></div>
<span class="t" style="left:587px;top:582.5px;font-family:'Liberation Sans','Noto Sans CJK JP',sans-serif;font-size:13px;font-weight:400;line-height:13px;color:#c8c8c8;transform:scaleX(0.7303);">なし</span>
<svg class="a" style="left:657.4px;top:587.4px;" width="9" height="5" viewBox="0 0 9 5"><path d="M0 0H9L4.5 5Z" fill="#d0d0d0"/></svg>
<div class="a" style="left:698px;top:582px;width:158px;height:16px;background:#948a46;box-shadow:inset 0 0 0 1px rgba(255,255,255,0.04);"></div>
<div class="a" style="left:0px;top:618px;width:690px;height:1px;background:#232323;"></div>
<div class="a" style="left:691px;top:618px;width:165px;height:1px;background:#222;"></div>
<div class="a" style="left:4px;top:602px;width:13px;height:13px;background:#1a1a1a;"></div>
<svg class="a" style="left:4.6px;top:604.6px;" width="12.4" height="8.4" viewBox="0 0 12.4 8.4"><path d="M0.2 4.2C2.2 0.8 4.4 0.1 6.2 0.1S10.2 0.8 12.2 4.2C10.2 7.6 8 8.3 6.2 8.3S2.2 7.6 0.2 4.2Z" fill="#ababab"/><path d="M2.2 4.2C3.6 2.4 4.8 1.9 6.2 1.9S8.8 2.4 10.2 4.2C8.8 6 7.6 6.5 6.2 6.5S3.6 6 2.2 4.2Z" fill="#444"/><circle cx="6.2" cy="4.2" r="2.5" fill="#161616"/><circle cx="7.3" cy="3.1" r="0.95" fill="#d8d8d8"/></svg>
<div class="a" style="left:34px;top:602px;width:13px;height:13px;background:#1a1a1a;background:linear-gradient(90deg,#191919 0,#191919 2.0px,#202020 2.0px,#202020 2.7px,#191919 2.7px,#191919 4.6px,#202020 4.6px,#202020 5.3px,#191919 5.3px,#191919 7.2px,#202020 7.2px,#202020 7.9px,#191919 7.9px,#191919 9.8px,#202020 9.8px,#202020 10.5px,#191919 10.5px,#191919 12.4px,#202020 12.4px,#202020 13.1px,#191919 13.1px);"></div>
<div class="a" style="left:49px;top:602px;width:13px;height:13px;background:#1a1a1a;background:linear-gradient(90deg,#191919 0,#191919 2.0px,#202020 2.0px,#202020 2.7px,#191919 2.7px,#191919 4.6px,#202020 4.6px,#202020 5.3px,#191919 5.3px,#191919 7.2px,#202020 7.2px,#202020 7.9px,#191919 7.9px,#191919 9.8px,#202020 9.8px,#202020 10.5px,#191919 10.5px,#191919 12.4px,#202020 12.4px,#202020 13.1px,#191919 13.1px);"></div>
<svg class="a" style="left:73px;top:605.4px;" width="7.4" height="7.4" viewBox="0 0 7.4 7.4"><path d="M0 0L7.4 3.7L0 7.4Z" fill="#c4c4c4"/></svg>
<div class="a" style="left:85px;top:602px;width:14px;height:14px;background:#a9cbc7;"></div>
<span class="t" style="left:106px;top:604px;font-family:'Liberation Sans','Noto Sans CJK JP',sans-serif;font-size:12px;font-weight:400;line-height:12px;color:#a9a9a9;transform:scaleX(0.8673);">5</span>
<svg class="a" style="left:136px;top:602px;" width="15" height="13" viewBox="0 0 15 13"><rect x="0.4" y="0.4" width="14.2" height="12.2" fill="#1c1c1c"/><rect x="1" y="1.6" width="13" height="9.8" fill="url(#skyg)"/><path d="M1.6 3H6.4V3.9H1.6Z" fill="#3f8fe0" opacity="0.8"/><path d="M1.4 7.6L2.4 5.6L3.4 6.8L4.2 5.2L5.4 7L6.6 6.4L7.8 7.2L10 6.8L12.6 7.4V8.2H1.4Z" fill="#2f6e50"/><path d="M2 9.4H11" stroke="#a8d0ec" stroke-width="0.5" opacity="0.7"/><rect x="3.4" y="1" width="8.2" height="0.9" fill="#fff"/><rect x="3.4" y="11.1" width="8.2" height="0.9" fill="#fff"/><path d="M0 0H4.2L0 4.2ZM15 0H10.8L15 4.2ZM0 13H4.2L0 8.8ZM15 13H10.8L15 8.8Z" fill="#3f90da"/></svg>
<span class="t" style="left:156px;top:604px;font-family:'Liberation Sans','Noto Sans CJK JP',sans-serif;font-size:12px;font-weight:400;line-height:12px;color:#a9a9a9;transform:scaleX(0.9579);">[woman_01.png]</span>
<div class="a" style="left:425px;top:602px;width:13px;height:13px;background:#1a1a1a;"></div>
<div class="a" style="left:455px;top:602px;width:13px;height:13px;background:#1a1a1a;"></div>
<div class="a" style="left:530px;top:602px;width:13px;height:13px;background:#1a1a1a;"></div>
<svg class="a" style="left:425.8px;top:605px;" width="11.5" height="10" viewBox="0 0 11.5 10"><path d="M0.5 6A5.2 5.9 0 0 1 10.9 6Z" fill="#d4d4d4"/><path d="M2.9 2.9H8.5M5.7 2.9V6" stroke="#222" stroke-width="1.1" fill="none"/><path d="M0 7.2H3.7M7.7 7.2H11.4" stroke="#d4d4d4" stroke-width="1.1"/><path d="M5.7 5.6V9.7" stroke="#d4d4d4" stroke-width="2.3"/></svg>
<svg class="a" style="left:455.6px;top:603px;" width="12" height="11" viewBox="0 0 12 11"><path d="M0.6 10.4L11.2 0.6" stroke="#bcbcbc" stroke-width="1.5" fill="none"/></svg>
<div class="a" style="left:500px;top:602px;width:13px;height:13px;background:#1a1a1a;background:linear-gradient(90deg,#191919 0,#191919 2.0px,#202020 2.0px,#202020 2.7px,#191919 2.7px,#191919 4.6px,#202020 4.6px,#202020 5.3px,#191919 5.3px,#191919 7.2px,#202020 7.2px,#202020 7.9px,#191919 7.9px,#191919 9.8px,#202020 9.8px,#202020 10.5px,#191919 10.5px,#191919 12.4px,#202020 12.4px,#202020 13.1px,#191919 13.1px);"></div>
<div class="a" style="left:515px;top:602px;width:13px;height:13px;background:#1a1a1a;background:linear-gradient(90deg,#191919 0,#191919 2.0px,#202020 2.0px,#202020 2.7px,#191919 2.7px,#191919 4.6px,#202020 4.6px,#202020 5.3px,#191919 5.3px,#191919 7.2px,#202020 7.2px,#202020 7.9px,#191919 7.9px,#191919 9.8px,#202020 9.8px,#202020 10.5px,#191919 10.5px,#191919 12.4px,#202020 12.4px,#202020 13.1px,#191919 13.1px);"></div>
<svg class="a" style="left:531px;top:603px;" width="11.6" height="12" viewBox="0 0 11.6 12"><path d="M5.8 0.6L11 3.2V8.8L5.8 11.4L0.6 8.8V3.2Z" fill="#3c3c3c" stroke="#b4b4b4" stroke-width="1" stroke-linejoin="round"/><path d="M0.6 3.2L5.8 5.8L11 3.2M5.8 5.8V11.4" fill="none" stroke="#b4b4b4" stroke-width="1"/></svg>
<svg class="a" style="left:562px;top:602.4px;" width="12" height="12" viewBox="0 0 12 12"><path d="M9.60 3.48L9.87 3.90L10.08 4.35L10.24 4.82L10.35 5.31L10.40 5.81L10.39 6.31L10.33 6.80L10.21 7.29L10.04 7.75L9.81 8.20L9.54 8.62L9.22 9.00L8.86 9.35L8.46 9.65L8.03 9.90L7.58 10.11L7.10 10.26L6.61 10.36L6.12 10.40L5.62 10.38L5.12 10.31L4.64 10.18L4.18 10.00L3.73 9.77L3.32 9.49L2.94 9.17L2.60 8.80L2.31 8.40L2.06 7.96L1.87 7.50L1.72 7.03L1.63 6.54L1.60 6.04L1.62 5.54L1.70 5.05L1.84 4.57L2.03 4.11L2.27 3.67L2.56 3.26L2.89 2.89L3.26 2.56L3.67 2.27L4.11 2.04L4.58 1.89L5.08 1.83L5.56 1.86L6.04 1.96L6.47 2.14L6.87 2.38L7.22 2.66L7.51 2.98L7.74 3.32L7.91 3.68L8.04 4.03L8.12 4.37L8.16 4.70L8.18 5.01L8.17 5.29L8.16 5.56L8.15 5.81L8.15 6.06L8.13 6.30L8.08 6.54L8.01 6.77L7.91 6.99L7.78 7.20L7.63 7.40L7.47 7.57L7.28 7.73L7.07 7.86L6.86 7.97L6.63 8.06L6.39 8.11L6.15 8.14L5.91 8.15L5.66 8.12L5.43 8.07L5.19 7.99L4.97 7.89L4.77 7.76L4.58 7.61L4.40 7.44L4.25 7.25L4.12 7.04L4.01 6.82L3.93 6.59L3.88 6.35L3.85 6.11L3.85 5.87L3.88 5.63L3.94 5.39L4.02 5.16L4.13 4.94L4.26 4.74L4.41 4.55L4.59 4.38L4.78 4.23L5.01 4.13L5.26 4.13L5.51 4.16L5.73 4.22L5.94 4.31L6.12 4.42L6.28 4.54L6.41 4.69L6.52 4.84L6.59 4.99L6.64 5.15L6.66 5.31L6.65 5.45" fill="none" stroke="#c0c0c0" stroke-width="1.25" stroke-linecap="round" stroke-linejoin="round"/></svg>
<div class="a" style="left:580px;top:600px;width:91px;height:18px;background:#1d1d1d;"></div>
<span class="t" style="left:587px;top:601.5px;font-family:'Liberation Sans','Noto Sans CJK JP',sans-serif;font-size:13px;font-weight:400;line-height:13px;color:#c8c8c8;transform:scaleX(0.7303);">なし</span>
<svg class="a" style="left:657.4px;top:606.4px;" width="9" height="5" viewBox="0 0 9 5"><path d="M0 0H9L4.5 5Z" fill="#d0d0d0"/></svg>
<div class="a" style="left:698px;top:601px;width:158px;height:16px;background:#768a89;box-shadow:inset 0 0 0 1px rgba(255,255,255,0.04);"></div>
<div class="a" style="left:0px;top:637px;width:690px;height:1px;background:#232323;"></div>
<div class="a" style="left:691px;top:637px;width:165px;height:1px;background:#222;"></div>
<div class="a" style="left:4px;top:621px;width:13px;height:13px;background:#1a1a1a;"></div>
<svg class="a" style="left:4.6px;top:623.6px;" width="12.4" height="8.4" viewBox="0 0 12.4 8.4"><path d="M0.2 4.2C2.2 0.8 4.4 0.1 6.2 0.1S10.2 0.8 12.2 4.2C10.2 7.6 8 8.3 6.2 8.3S2.2 7.6 0.2 4.2Z" fill="#ababab"/><path d="M2.2 4.2C3.6 2.4 4.8 1.9 6.2 1.9S8.8 2.4 10.2 4.2C8.8 6 7.6 6.5 6.2 6.5S3.6 6 2.2 4.2Z" fill="#444"/><circle cx="6.2" cy="4.2" r="2.5" fill="#161616"/><circle cx="7.3" cy="3.1" r="0.95" fill="#d8d8d8"/></svg>
<div class="a" style="left:34px;top:621px;width:13px;height:13px;background:#1a1a1a;background:linear-gradient(90deg,#191919 0,#191919 2.0px,#202020 2.0px,#202020 2.7px,#191919 2.7px,#191919 4.6px,#202020 4.6px,#202020 5.3px,#191919 5.3px,#191919 7.2px,#202020 7.2px,#202020 7.9px,#191919 7.9px,#191919 9.8px,#202020 9.8px,#202020 10.5px,#191919 10.5px,#191919 12.4px,#202020 12.4px,#202020 13.1px,#191919 13.1px);"></div>
<div class="a" style="left:49px;top:621px;width:13px;height:13px;background:#1a1a1a;background:linear-gradient(90deg,#191919 0,#191919 2.0px,#202020 2.0px,#202020 2.7px,#191919 2.7px,#191919 4.6px,#202020 4.6px,#202020 5.3px,#191919 5.3px,#191919 7.2px,#202020 7.2px,#202020 7.9px,#191919 7.9px,#191919 9.8px,#202020 9.8px,#202020 10.5px,#191919 10.5px,#191919 12.4px,#202020 12.4px,#202020 13.1px,#191919 13.1px);"></div>
<svg class="a" style="left:73px;top:624.4px;" width="7.4" height="7.4" viewBox="0 0 7.4 7.4"><path d="M0 0L7.4 3.7L0 7.4Z" fill="#c4c4c4"/></svg>
<div class="a" style="left:85px;top:621px;width:14px;height:14px;background:#a9cbc7;"></div>
<span class="t" style="left:106px;top:623px;font-family:'Liberation Sans','Noto Sans CJK JP',sans-serif;font-size:12px;font-weight:400;line-height:12px;color:#a9a9a9;transform:scaleX(0.8673);">6</span>
<svg class="a" style="left:136px;top:621px;" width="15" height="13" viewBox="0 0 15 13"><rect x="0.4" y="0.4" width="14.2" height="12.2" fill="#1c1c1c"/><rect x="1" y="1.6" width="13" height="9.8" fill="url(#skyg)"/><path d="M1.6 3H6.4V3.9H1.6Z" fill="#3f8fe0" opacity="0.8"/><path d="M1.4 7.6L2.4 5.6L3.4 6.8L4.2 5.2L5.4 7L6.6 6.4L7.8 7.2L10 6.8L12.6 7.4V8.2H1.4Z" fill="#2f6e50"/><path d="M2 9.4H11" stroke="#a8d0ec" stroke-width="0.5" opacity="0.7"/><rect x="3.4" y="1" width="8.2" height="0.9" fill="#fff"/><rect x="3.4" y="11.1" width="8.2" height="0.9" fill="#fff"/><path d="M0 0H4.2L0 4.2ZM15 0H10.8L15 4.2ZM0 13H4.2L0 8.8ZM15 13H10.8L15 8.8Z" fill="#3f90da"/></svg>
<span class="t" style="left:156px;top:623px;font-family:'Liberation Sans','Noto Sans CJK JP',sans-serif;font-size:12px;font-weight:400;line-height:12px;color:#a9a9a9;transform:scaleX(0.9579);">[woman_02.png]</span>
<div class="a" style="left:425px;top:621px;width:13px;height:13px;background:#1a1a1a;"></div>
<div class="a" style="left:455px;top:621px;width:13px;height:13px;background:#1a1a1a;"></div>
<div class="a" style="left:530px;top:621px;width:13px;height:13px;background:#1a1a1a;"></div>
<svg class="a" style="left:425.8px;top:624px;" width="11.5" height="10" viewBox="0 0 11.5 10"><path d="M0.5 6A5.2 5.9 0 0 1 10.9 6Z" fill="#d4d4d4"/><path d="M2.9 2.9H8.5M5.7 2.9V6" stroke="#222" stroke-width="1.1" fill="none"/><path d="M0 7.2H3.7M7.7 7.2H11.4" stroke="#d4d4d4" stroke-width="1.1"/><path d="M5.7 5.6V9.7" stroke="#d4d4d4" stroke-width="2.3"/></svg>
<svg class="a" style="left:455.6px;top:622px;" width="12" height="11" viewBox="0 0 12 11"><path d="M0.6 10.4L11.2 0.6" stroke="#bcbcbc" stroke-width="1.5" fill="none"/></svg>
<div class="a" style="left:500px;top:621px;width:13px;height:13px;background:#1a1a1a;background:linear-gradient(90deg,#191919 0,#191919 2.0px,#202020 2.0px,#202020 2.7px,#191919 2.7px,#191919 4.6px,#202020 4.6px,#202020 5.3px,#191919 5.3px,#191919 7.2px,#202020 7.2px,#202020 7.9px,#191919 7.9px,#191919 9.8px,#202020 9.8px,#202020 10.5px,#191919 10.5px,#191919 12.4px,#202020 12.4px,#202020 13.1px,#191919 13.1px);"></div>
<div class="a" style="left:515px;top:621px;width:13px;height:13px;background:#1a1a1a;background:linear-gradient(90deg,#191919 0,#191919 2.0px,#202020 2.0px,#202020 2.7px,#191919 2.7px,#191919 4.6px,#202020 4.6px,#202020 5.3px,#191919 5.3px,#191919 7.2px,#202020 7.2px,#202020 7.9px,#191919 7.9px,#191919 9.8px,#202020 9.8px,#202020 10.5px,#191919 10.5px,#191919 12.4px,#202020 12.4px,#202020 13.1px,#191919 13.1px);"></div>
<svg class="a" style="left:531px;top:622px;" width="11.6" height="12" viewBox="0 0 11.6 12"><path d="M5.8 0.6L11 3.2V8.8L5.8 11.4L0.6 8.8V3.2Z" fill="#3c3c3c" stroke="#b4b4b4" stroke-width="1" stroke-linejoin="round"/><path d="M0.6 3.2L5.8 5.8L11 3.2M5.8 5.8V11.4" fill="none" stroke="#b4b4b4" stroke-width="1"/></svg>
<svg class="a" style="left:562px;top:621.4px;" width="12" height="12" viewBox="0 0 12 12"><path d="M9.60 3.48L9.87 3.90L10.08 4.35L10.24 4.82L10.35 5.31L10.40 5.81L10.39 6.31L10.33 6.80L10.21 7.29L10.04 7.75L9.81 8.20L9.54 8.62L9.22 9.00L8.86 9.35L8.46 9.65L8.03 9.90L7.58 10.11L7.10 10.26L6.61 10.36L6.12 10.40L5.62 10.38L5.12 10.31L4.64 10.18L4.18 10.00L3.73 9.77L3.32 9.49L2.94 9.17L2.60 8.80L2.31 8.40L2.06 7.96L1.87 7.50L1.72 7.03L1.63 6.54L1.60 6.04L1.62 5.54L1.70 5.05L1.84 4.57L2.03 4.11L2.27 3.67L2.56 3.26L2.89 2.89L3.26 2.56L3.67 2.27L4.11 2.04L4.58 1.89L5.08 1.83L5.56 1.86L6.04 1.96L6.47 2.14L6.87 2.38L7.22 2.66L7.51 2.98L7.74 3.32L7.91 3.68L8.04 4.03L8.12 4.37L8.16 4.70L8.18 5.01L8.17 5.29L8.16 5.56L8.15 5.81L8.15 6.06L8.13 6.30L8.08 6.54L8.01 6.77L7.91 6.99L7.78 7.20L7.63 7.40L7.47 7.57L7.28 7.73L7.07 7.86L6.86 7.97L6.63 8.06L6.39 8.11L6.15 8.14L5.91 8.15L5.66 8.12L5.43 8.07L5.19 7.99L4.97 7.89L4.77 7.76L4.58 7.61L4.40 7.44L4.25 7.25L4.12 7.04L4.01 6.82L3.93 6.59L3.88 6.35L3.85 6.11L3.85 5.87L3.88 5.63L3.94 5.39L4.02 5.16L4.13 4.94L4.26 4.74L4.41 4.55L4.59 4.38L4.78 4.23L5.01 4.13L5.26 4.13L5.51 4.16L5.73 4.22L5.94 4.31L6.12 4.42L6.28 4.54L6.41 4.69L6.52 4.84L6.59 4.99L6.64 5.15L6.66 5.31L6.65 5.45" fill="none" stroke="#c0c0c0" stroke-width="1.25" stroke-linecap="round" stroke-linejoin="round"/></svg>
<div class="a" style="left:580px;top:619px;width:91px;height:18px;background:#1d1d1d;"></div>
<span class="t" style="left:587px;top:620.5px;font-family:'Liberation Sans','Noto Sans CJK JP',sans-serif;font-size:13px;font-weight:400;line-height:13px;color:#c8c8c8;transform:scaleX(0.7303);">なし</span>
<svg class="a" style="left:657.4px;top:625.4px;" width="9" height="5" viewBox="0 0 9 5"><path d="M0 0H9L4.5 5Z" fill="#d0d0d0"/></svg>
<div class="a" style="left:698px;top:620px;width:158px;height:16px;background:#768a89;box-shadow:inset 0 0 0 1px rgba(255,255,255,0.04);"></div>
<div class="a" style="left:0px;top:656px;width:690px;height:1px;background:#232323;"></div>
<div class="a" style="left:691px;top:656px;width:165px;height:1px;background:#222;"></div>
<div class="a" style="left:4px;top:640px;width:13px;height:13px;background:#1a1a1a;"></div>
<svg class="a" style="left:4.6px;top:642.6px;" width="12.4" height="8.4" viewBox="0 0 12.4 8.4"><path d="M0.2 4.2C2.2 0.8 4.4 0.1 6.2 0.1S10.2 0.8 12.2 4.2C10.2 7.6 8 8.3 6.2 8.3S2.2 7.6 0.2 4.2Z" fill="#ababab"/><path d="M2.2 4.2C3.6 2.4 4.8 1.9 6.2 1.9S8.8 2.4 10.2 4.2C8.8 6 7.6 6.5 6.2 6.5S3.6 6 2.2 4.2Z" fill="#444"/><circle cx="6.2" cy="4.2" r="2.5" fill="#161616"/><circle cx="7.3" cy="3.1" r="0.95" fill="#d8d8d8"/></svg>
<div class="a" style="left:34px;top:640px;width:13px;height:13px;background:#1a1a1a;background:linear-gradient(90deg,#191919 0,#191919 2.0px,#202020 2.0px,#202020 2.7px,#191919 2.7px,#191919 4.6px,#202020 4.6px,#202020 5.3px,#191919 5.3px,#191919 7.2px,#202020 7.2px,#202020 7.9px,#191919 7.9px,#191919 9.8px,#202020 9.8px,#202020 10.5px,#191919 10.5px,#191919 12.4px,#202020 12.4px,#202020 13.1px,#191919 13.1px);"></div>
<div class="a" style="left:49px;top:640px;width:13px;height:13px;background:#1a1a1a;background:linear-gradient(90deg,#191919 0,#191919 2.0px,#202020 2.0px,#202020 2.7px,#191919 2.7px,#191919 4.6px,#202020 4.6px,#202020 5.3px,#191919 5.3px,#191919 7.2px,#202020 7.2px,#202020 7.9px,#191919 7.9px,#191919 9.8px,#202020 9.8px,#202020 10.5px,#191919 10.5px,#191919 12.4px,#202020 12.4px,#202020 13.1px,#191919 13.1px);"></div>
<svg class="a" style="left:73px;top:643.4px;" width="7.4" height="7.4" viewBox="0 0 7.4 7.4"><path d="M0 0L7.4 3.7L0 7.4Z" fill="#c4c4c4"/></svg>
<div class="a" style="left:85px;top:640px;width:14px;height:14px;background:#a9cbc7;"></div>
<span class="t" style="left:106px;top:642px;font-family:'Liberation Sans','Noto Sans CJK JP',sans-serif;font-size:12px;font-weight:400;line-height:12px;color:#a9a9a9;transform:scaleX(0.8673);">7</span>
<svg class="a" style="left:136px;top:640px;" width="15" height="13" viewBox="0 0 15 13"><rect x="0.4" y="0.4" width="14.2" height="12.2" fill="#1c1c1c"/><rect x="1" y="1.6" width="13" height="9.8" fill="url(#skyg)"/><path d="M1.6 3H6.4V3.9H1.6Z" fill="#3f8fe0" opacity="0.8"/><path d="M1.4 7.6L2.4 5.6L3.4 6.8L4.2 5.2L5.4 7L6.6 6.4L7.8 7.2L10 6.8L12.6 7.4V8.2H1.4Z" fill="#2f6e50"/><path d="M2 9.4H11" stroke="#a8d0ec" stroke-width="0.5" opacity="0.7"/><rect x="3.4" y="1" width="8.2" height="0.9" fill="#fff"/><rect x="3.4" y="11.1" width="8.2" height="0.9" fill="#fff"/><path d="M0 0H4.2L0 4.2ZM15 0H10.8L15 4.2ZM0 13H4.2L0 8.8ZM15 13H10.8L15 8.8Z" fill="#3f90da"/></svg>
<span class="t" style="left:156px;top:642px;font-family:'Liberation Sans','Noto Sans CJK JP',sans-serif;font-size:12px;font-weight:400;line-height:12px;color:#a9a9a9;transform:scaleX(0.9579);">[woman_03.png]</span>
<div class="a" style="left:425px;top:640px;width:13px;height:13px;background:#1a1a1a;"></div>
<div class="a" style="left:455px;top:640px;width:13px;height:13px;background:#1a1a1a;"></div>
<div class="a" style="left:530px;top:640px;width:13px;height:13px;background:#1a1a1a;"></div>
<svg class="a" style="left:425.8px;top:643px;" width="11.5" height="10" viewBox="0 0 11.5 10"><path d="M0.5 6A5.2 5.9 0 0 1 10.9 6Z" fill="#d4d4d4"/><path d="M2.9 2.9H8.5M5.7 2.9V6" stroke="#222" stroke-width="1.1" fill="none"/><path d="M0 7.2H3.7M7.7 7.2H11.4" stroke="#d4d4d4" stroke-width="1.1"/><path d="M5.7 5.6V9.7" stroke="#d4d4d4" stroke-width="2.3"/></svg>
<svg class="a" style="left:455.6px;top:641px;" width="12" height="11" viewBox="0 0 12 11"><path d="M0.6 10.4L11.2 0.6" stroke="#bcbcbc" stroke-width="1.5" fill="none"/></svg>
<div class="a" style="left:500px;top:640px;width:13px;height:13px;background:#1a1a1a;background:linear-gradient(90deg,#191919 0,#191919 2.0px,#202020 2.0px,#202020 2.7px,#191919 2.7px,#191919 4.6px,#202020 4.6px,#202020 5.3px,#191919 5.3px,#191919 7.2px,#202020 7.2px,#202020 7.9px,#191919 7.9px,#191919 9.8px,#202020 9.8px,#202020 10.5px,#191919 10.5px,#191919 12.4px,#202020 12.4px,#202020 13.1px,#191919 13.1px);"></div>
<div class="a" style="left:515px;top:640px;width:13px;height:13px;background:#1a1a1a;background:linear-gradient(90deg,#191919 0,#191919 2.0px,#202020 2.0px,#202020 2.7px,#191919 2.7px,#191919 4.6px,#202020 4.6px,#202020 5.3px,#191919 5.3px,#191919 7.2px,#202020 7.2px,#202020 7.9px,#191919 7.9px,#191919 9.8px,#202020 9.8px,#202020 10.5px,#191919 10.5px,#191919 12.4px,#202020 12.4px,#202020 13.1px,#191919 13.1px);"></div>
<svg class="a" style="left:531px;top:641px;" width="11.6" height="12" viewBox="0 0 11.6 12"><path d="M5.8 0.6L11 3.2V8.8L5.8 11.4L0.6 8.8V3.2Z" fill="#3c3c3c" stroke="#b4b4b4" stroke-width="1" stroke-linejoin="round"/><path d="M0.6 3.2L5.8 5.8L11 3.2M5.8 5.8V11.4" fill="none" stroke="#b4b4b4" stroke-width="1"/></svg>
<svg class="a" style="left:562px;top:640.4px;" width="12" height="12" viewBox="0 0 12 12"><path d="M9.60 3.48L9.87 3.90L10.08 4.35L10.24 4.82L10.35 5.31L10.40 5.81L10.39 6.31L10.33 6.80L10.21 7.29L10.04 7.75L9.81 8.20L9.54 8.62L9.22 9.00L8.86 9.35L8.46 9.65L8.03 9.90L7.58 10.11L7.10 10.26L6.61 10.36L6.12 10.40L5.62 10.38L5.12 10.31L4.64 10.18L4.18 10.00L3.73 9.77L3.32 9.49L2.94 9.17L2.60 8.80L2.31 8.40L2.06 7.96L1.87 7.50L1.72 7.03L1.63 6.54L1.60 6.04L1.62 5.54L1.70 5.05L1.84 4.57L2.03 4.11L2.27 3.67L2.56 3.26L2.89 2.89L3.26 2.56L3.67 2.27L4.11 2.04L4.58 1.89L5.08 1.83L5.56 1.86L6.04 1.96L6.47 2.14L6.87 2.38L7.22 2.66L7.51 2.98L7.74 3.32L7.91 3.68L8.04 4.03L8.12 4.37L8.16 4.70L8.18 5.01L8.17 5.29L8.16 5.56L8.15 5.81L8.15 6.06L8.13 6.30L8.08 6.54L8.01 6.77L7.91 6.99L7.78 7.20L7.63 7.40L7.47 7.57L7.28 7.73L7.07 7.86L6.86 7.97L6.63 8.06L6.39 8.11L6.15 8.14L5.91 8.15L5.66 8.12L5.43 8.07L5.19 7.99L4.97 7.89L4.77 7.76L4.58 7.61L4.40 7.44L4.25 7.25L4.12 7.04L4.01 6.82L3.93 6.59L3.88 6.35L3.85 6.11L3.85 5.87L3.88 5.63L3.94 5.39L4.02 5.16L4.13 4.94L4.26 4.74L4.41 4.55L4.59 4.38L4.78 4.23L5.01 4.13L5.26 4.13L5.51 4.16L5.73 4.22L5.94 4.31L6.12 4.42L6.28 4.54L6.41 4.69L6.52 4.84L6.59 4.99L6.64 5.15L6.66 5.31L6.65 5.45" fill="none" stroke="#c0c0c0" stroke-width="1.25" stroke-linecap="round" stroke-linejoin="round"/></svg>
<div class="a" style="left:580px;top:638px;width:91px;height:18px;background:#1d1d1d;"></div>
<span class="t" style="left:587px;top:639.5px;font-family:'Liberation Sans','Noto Sans CJK JP',sans-serif;font-size:13px;font-weight:400;line-height:13px;color:#c8c8c8;transform:scaleX(0.7303);">なし</span>
<svg class="a" style="left:657.4px;top:644.4px;" width="9" height="5" viewBox="0 0 9 5"><path d="M0 0H9L4.5 5Z" fill="#d0d0d0"/></svg>
<div class="a" style="left:698px;top:639px;width:158px;height:16px;background:#768a89;box-shadow:inset 0 0 0 1px rgba(255,255,255,0.04);"></div>
<div class="a" style="left:0px;top:675px;width:690px;height:1px;background:#232323;"></div>
<div class="a" style="left:691px;top:675px;width:165px;height:1px;background:#222;"></div>
<div class="a" style="left:4px;top:659px;width:13px;height:13px;background:#1a1a1a;"></div>
<svg class="a" style="left:4.6px;top:661.6px;" width="12.4" height="8.4" viewBox="0 0 12.4 8.4"><path d="M0.2 4.2C2.2 0.8 4.4 0.1 6.2 0.1S10.2 0.8 12.2 4.2C10.2 7.6 8 8.3 6.2 8.3S2.2 7.6 0.2 4.2Z" fill="#ababab"/><path d="M2.2 4.2C3.6 2.4 4.8 1.9 6.2 1.9S8.8 2.4 10.2 4.2C8.8 6 7.6 6.5 6.2 6.5S3.6 6 2.2 4.2Z" fill="#444"/><circle cx="6.2" cy="4.2" r="2.5" fill="#161616"/><circle cx="7.3" cy="3.1" r="0.95" fill="#d8d8d8"/></svg>
<div class="a" style="left:34px;top:659px;width:13px;height:13px;background:#1a1a1a;background:linear-gradient(90deg,#191919 0,#191919 2.0px,#202020 2.0px,#202020 2.7px,#191919 2.7px,#191919 4.6px,#202020 4.6px,#202020 5.3px,#191919 5.3px,#191919 7.2px,#202020 7.2px,#202020 7.9px,#191919 7.9px,#191919 9.8px,#202020 9.8px,#202020 10.5px,#191919 10.5px,#191919 12.4px,#202020 12.4px,#202020 13.1px,#191919 13.1px);"></div>
<div class="a" style="left:49px;top:659px;width:13px;height:13px;background:#1a1a1a;background:linear-gradient(90deg,#191919 0,#191919 2.0px,#202020 2.0px,#202020 2.7px,#191919 2.7px,#191919 4.6px,#202020 4.6px,#202020 5.3px,#191919 5.3px,#191919 7.2px,#202020 7.2px,#202020 7.9px,#191919 7.9px,#191919 9.8px,#202020 9.8px,#202020 10.5px,#191919 10.5px,#191919 12.4px,#202020 12.4px,#202020 13.1px,#191919 13.1px);"></div>
<svg class="a" style="left:73px;top:662.4px;" width="7.4" height="7.4" viewBox="0 0 7.4 7.4"><path d="M0 0L7.4 3.7L0 7.4Z" fill="#c4c4c4"/></svg>
<div class="a" style="left:85px;top:659px;width:14px;height:14px;background:#e4bcc8;"></div>
<span class="t" style="left:106px;top:661px;font-family:'Liberation Sans','Noto Sans CJK JP',sans-serif;font-size:12px;font-weight:400;line-height:12px;color:#a9a9a9;transform:scaleX(0.8673);">8</span>
<svg class="a" style="left:136px;top:659px;" width="15" height="13" viewBox="0 0 15 13"><rect x="0.4" y="0.4" width="14.2" height="12.2" fill="#1c1c1c"/><rect x="1" y="1.6" width="13" height="9.8" fill="url(#skyg)"/><path d="M1.6 3H6.4V3.9H1.6Z" fill="#3f8fe0" opacity="0.8"/><path d="M1.4 7.6L2.4 5.6L3.4 6.8L4.2 5.2L5.4 7L6.6 6.4L7.8 7.2L10 6.8L12.6 7.4V8.2H1.4Z" fill="#2f6e50"/><path d="M2 9.4H11" stroke="#a8d0ec" stroke-width="0.5" opacity="0.7"/><rect x="3.4" y="1" width="8.2" height="0.9" fill="#fff"/><rect x="3.4" y="11.1" width="8.2" height="0.9" fill="#fff"/><path d="M0 0H4.2L0 4.2ZM15 0H10.8L15 4.2ZM0 13H4.2L0 8.8ZM15 13H10.8L15 8.8Z" fill="#3f90da"/></svg>
<span class="t" style="left:156px;top:661px;font-family:'Liberation Sans','Noto Sans CJK JP',sans-serif;font-size:12px;font-weight:400;line-height:12px;color:#a9a9a9;transform:scaleX(0.9538);">[man_01.png]</span>
<div class="a" style="left:425px;top:659px;width:13px;height:13px;background:#1a1a1a;"></div>
<div class="a" style="left:455px;top:659px;width:13px;height:13px;background:#1a1a1a;"></div>
<div class="a" style="left:530px;top:659px;width:13px;height:13px;background:#1a1a1a;"></div>
<svg class="a" style="left:425.8px;top:662px;" width="11.5" height="10" viewBox="0 0 11.5 10"><path d="M0.5 6A5.2 5.9 0 0 1 10.9 6Z" fill="#d4d4d4"/><path d="M2.9 2.9H8.5M5.7 2.9V6" stroke="#222" stroke-width="1.1" fill="none"/><path d="M0 7.2H3.7M7.7 7.2H11.4" stroke="#d4d4d4" stroke-width="1.1"/><path d="M5.7 5.6V9.7" stroke="#d4d4d4" stroke-width="2.3"/></svg>
<svg class="a" style="left:455.6px;top:660px;" width="12" height="11" viewBox="0 0 12 11"><path d="M0.6 10.4L11.2 0.6" stroke="#bcbcbc" stroke-width="1.5" fill="none"/></svg>
<div class="a" style="left:500px;top:659px;width:13px;height:13px;background:#1a1a1a;background:linear-gradient(90deg,#191919 0,#191919 2.0px,#202020 2.0px,#202020 2.7px,#191919 2.7px,#191919 4.6px,#202020 4.6px,#202020 5.3px,#191919 5.3px,#191919 7.2px,#202020 7.2px,#202020 7.9px,#191919 7.9px,#191919 9.8px,#202020 9.8px,#202020 10.5px,#191919 10.5px,#191919 12.4px,#202020 12.4px,#202020 13.1px,#191919 13.1px);"></div>
<div class="a" style="left:515px;top:659px;width:13px;height:13px;background:#1a1a1a;background:linear-gradient(90deg,#191919 0,#191919 2.0px,#202020 2.0px,#202020 2.7px,#191919 2.7px,#191919 4.6px,#202020 4.6px,#202020 5.3px,#191919 5.3px,#191919 7.2px,#202020 7.2px,#202020 7.9px,#191919 7.9px,#191919 9.8px,#202020 9.8px,#202020 10.5px,#191919 10.5px,#191919 12.4px,#202020 12.4px,#202020 13.1px,#191919 13.1px);"></div>
<svg class="a" style="left:531px;top:660px;" width="11.6" height="12" viewBox="0 0 11.6 12"><path d="M5.8 0.6L11 3.2V8.8L5.8 11.4L0.6 8.8V3.2Z" fill="#3c3c3c" stroke="#b4b4b4" stroke-width="1" stroke-linejoin="round"/><path d="M0.6 3.2L5.8 5.8L11 3.2M5.8 5.8V11.4" fill="none" stroke="#b4b4b4" stroke-width="1"/></svg>
<svg class="a" style="left:562px;top:659.4px;" width="12" height="12" viewBox="0 0 12 12"><path d="M9.60 3.48L9.87 3.90L10.08 4.35L10.24 4.82L10.35 5.31L10.40 5.81L10.39 6.31L10.33 6.80L10.21 7.29L10.04 7.75L9.81 8.20L9.54 8.62L9.22 9.00L8.86 9.35L8.46 9.65L8.03 9.90L7.58 10.11L7.10 10.26L6.61 10.36L6.12 10.40L5.62 10.38L5.12 10.31L4.64 10.18L4.18 10.00L3.73 9.77L3.32 9.49L2.94 9.17L2.60 8.80L2.31 8.40L2.06 7.96L1.87 7.50L1.72 7.03L1.63 6.54L1.60 6.04L1.62 5.54L1.70 5.05L1.84 4.57L2.03 4.11L2.27 3.67L2.56 3.26L2.89 2.89L3.26 2.56L3.67 2.27L4.11 2.04L4.58 1.89L5.08 1.83L5.56 1.86L6.04 1.96L6.47 2.14L6.87 2.38L7.22 2.66L7.51 2.98L7.74 3.32L7.91 3.68L8.04 4.03L8.12 4.37L8.16 4.70L8.18 5.01L8.17 5.29L8.16 5.56L8.15 5.81L8.15 6.06L8.13 6.30L8.08 6.54L8.01 6.77L7.91 6.99L7.78 7.20L7.63 7.40L7.47 7.57L7.28 7.73L7.07 7.86L6.86 7.97L6.63 8.06L6.39 8.11L6.15 8.14L5.91 8.15L5.66 8.12L5.43 8.07L5.19 7.99L4.97 7.89L4.77 7.76L4.58 7.61L4.40 7.44L4.25 7.25L4.12 7.04L4.01 6.82L3.93 6.59L3.88 6.35L3.85 6.11L3.85 5.87L3.88 5.63L3.94 5.39L4.02 5.16L4.13 4.94L4.26 4.74L4.41 4.55L4.59 4.38L4.78 4.23L5.01 4.13L5.26 4.13L5.51 4.16L5.73 4.22L5.94 4.31L6.12 4.42L6.28 4.54L6.41 4.69L6.52 4.84L6.59 4.99L6.64 5.15L6.66 5.31L6.65 5.45" fill="none" stroke="#c0c0c0" stroke-width="1.25" stroke-linecap="round" stroke-linejoin="round"/></svg>
<div class="a" style="left:580px;top:657px;width:91px;height:18px;background:#1d1d1d;"></div>
<span class="t" style="left:587px;top:658.5px;font-family:'Liberation Sans','Noto Sans CJK JP',sans-serif;font-size:13px;font-weight:400;line-height:13px;color:#c8c8c8;transform:scaleX(0.7303);">なし</span>
<svg class="a" style="left:657.4px;top:663.4px;" width="9" height="5" viewBox="0 0 9 5"><path d="M0 0H9L4.5 5Z" fill="#d0d0d0"/></svg>
<div class="a" style="left:698px;top:658px;width:158px;height:16px;background:#92808a;box-shadow:inset 0 0 0 1px rgba(255,255,255,0.04);"></div>
<div class="a" style="left:0px;top:694px;width:690px;height:1px;background:#232323;"></div>
<div class="a" style="left:691px;top:694px;width:165px;height:1px;background:#222;"></div>
<div class="a" style="left:4px;top:678px;width:13px;height:13px;background:#1a1a1a;"></div>
<svg class="a" style="left:4.6px;top:680.6px;" width="12.4" height="8.4" viewBox="0 0 12.4 8.4"><path d="M0.2 4.2C2.2 0.8 4.4 0.1 6.2 0.1S10.2 0.8 12.2 4.2C10.2 7.6 8 8.3 6.2 8.3S2.2 7.6 0.2 4.2Z" fill="#ababab"/><path d="M2.2 4.2C3.6 2.4 4.8 1.9 6.2 1.9S8.8 2.4 10.2 4.2C8.8 6 7.6 6.5 6.2 6.5S3.6 6 2.2 4.2Z" fill="#444"/><circle cx="6.2" cy="4.2" r="2.5" fill="#161616"/><circle cx="7.3" cy="3.1" r="0.95" fill="#d8d8d8"/></svg>
<div class="a" style="left:34px;top:678px;width:13px;height:13px;background:#1a1a1a;background:linear-gradient(90deg,#191919 0,#191919 2.0px,#202020 2.0px,#202020 2.7px,#191919 2.7px,#191919 4.6px,#202020 4.6px,#202020 5.3px,#191919 5.3px,#191919 7.2px,#202020 7.2px,#202020 7.9px,#191919 7.9px,#191919 9.8px,#202020 9.8px,#202020 10.5px,#191919 10.5px,#191919 12.4px,#202020 12.4px,#202020 13.1px,#191919 13.1px);"></div>
<div class="a" style="left:49px;top:678px;width:13px;height:13px;background:#1a1a1a;background:linear-gradient(90deg,#191919 0,#191919 2.0px,#202020 2.0px,#202020 2.7px,#191919 2.7px,#191919 4.6px,#202020 4.6px,#202020 5.3px,#191919 5.3px,#191919 7.2px,#202020 7.2px,#202020 7.9px,#191919 7.9px,#191919 9.8px,#202020 9.8px,#202020 10.5px,#191919 10.5px,#191919 12.4px,#202020 12.4px,#202020 13.1px,#191919 13.1px);"></div>
<svg class="a" style="left:73px;top:681.4px;" width="7.4" height="7.4" viewBox="0 0 7.4 7.4"><path d="M0 0L7.4 3.7L0 7.4Z" fill="#c4c4c4"/></svg>
<div class="a" style="left:85px;top:678px;width:14px;height:14px;background:#e4bcc8;"></div>
<span class="t" style="left:106px;top:680px;font-family:'Liberation Sans','Noto Sans CJK JP',sans-serif;font-size:12px;font-weight:400;line-height:12px;color:#a9a9a9;transform:scaleX(0.8673);">9</span>
<svg class="a" style="left:136px;top:678px;" width="15" height="13" viewBox="0 0 15 13"><rect x="0.4" y="0.4" width="14.2" height="12.2" fill="#1c1c1c"/><rect x="1" y="1.6" width="13" height="9.8" fill="url(#skyg)"/><path d="M1.6 3H6.4V3.9H1.6Z" fill="#3f8fe0" opacity="0.8"/><path d="M1.4 7.6L2.4 5.6L3.4 6.8L4.2 5.2L5.4 7L6.6 6.4L7.8 7.2L10 6.8L12.6 7.4V8.2H1.4Z" fill="#2f6e50"/><path d="M2 9.4H11" stroke="#a8d0ec" stroke-width="0.5" opacity="0.7"/><rect x="3.4" y="1" width="8.2" height="0.9" fill="#fff"/><rect x="3.4" y="11.1" width="8.2" height="0.9" fill="#fff"/><path d="M0 0H4.2L0 4.2ZM15 0H10.8L15 4.2ZM0 13H4.2L0 8.8ZM15 13H10.8L15 8.8Z" fill="#3f90da"/></svg>
<span class="t" style="left:156px;top:680px;font-family:'Liberation Sans','Noto Sans CJK JP',sans-serif;font-size:12px;font-weight:400;line-height:12px;color:#a9a9a9;transform:scaleX(0.9538);">[man_02.png]</span>
<div class="a" style="left:425px;top:678px;width:13px;height:13px;background:#1a1a1a;"></div>
<div class="a" style="left:455px;top:678px;width:13px;height:13px;background:#1a1a1a;"></div>
<div class="a" style="left:530px;top:678px;width:13px;height:13px;background:#1a1a1a;"></div>
<svg class="a" style="left:425.8px;top:681px;" width="11.5" height="10" viewBox="0 0 11.5 10"><path d="M0.5 6A5.2 5.9 0 0 1 10.9 6Z" fill="#d4d4d4"/><path d="M2.9 2.9H8.5M5.7 2.9V6" stroke="#222" stroke-width="1.1" fill="none"/><path d="M0 7.2H3.7M7.7 7.2H11.4" stroke="#d4d4d4" stroke-width="1.1"/><path d="M5.7 5.6V9.7" stroke="#d4d4d4" stroke-width="2.3"/></svg>
<svg class="a" style="left:455.6px;top:679px;" width="12" height="11" viewBox="0 0 12 11"><path d="M0.6 10.4L11.2 0.6" stroke="#bcbcbc" stroke-width="1.5" fill="none"/></svg>
<div class="a" style="left:500px;top:678px;width:13px;height:13px;background:#1a1a1a;background:linear-gradient(90deg,#191919 0,#191919 2.0px,#202020 2.0px,#202020 2.7px,#191919 2.7px,#191919 4.6px,#202020 4.6px,#202020 5.3px,#191919 5.3px,#191919 7.2px,#202020 7.2px,#202020 7.9px,#191919 7.9px,#191919 9.8px,#202020 9.8px,#202020 10.5px,#191919 10.5px,#191919 12.4px,#202020 12.4px,#202020 13.1px,#191919 13.1px);"></div>
<div class="a" style="left:515px;top:678px;width:13px;height:13px;background:#1a1a1a;background:linear-gradient(90deg,#191919 0,#191919 2.0px,#202020 2.0px,#202020 2.7px,#191919 2.7px,#191919 4.6px,#202020 4.6px,#202020 5.3px,#191919 5.3px,#191919 7.2px,#202020 7.2px,#202020 7.9px,#191919 7.9px,#191919 9.8px,#202020 9.8px,#202020 10.5px,#191919 10.5px,#191919 12.4px,#202020 12.4px,#202020 13.1px,#191919 13.1px);"></div>
<svg class="a" style="left:531px;top:679px;" width="11.6" height="12" viewBox="0 0 11.6 12"><path d="M5.8 0.6L11 3.2V8.8L5.8 11.4L0.6 8.8V3.2Z" fill="#3c3c3c" stroke="#b4b4b4" stroke-width="1" stroke-linejoin="round"/><path d="M0.6 3.2L5.8 5.8L11 3.2M5.8 5.8V11.4" fill="none" stroke="#b4b4b4" stroke-width="1"/></svg>
<svg class="a" style="left:562px;top:678.4px;" width="12" height="12" viewBox="0 0 12 12"><path d="M9.60 3.48L9.87 3.90L10.08 4.35L10.24 4.82L10.35 5.31L10.40 5.81L10.39 6.31L10.33 6.80L10.21 7.29L10.04 7.75L9.81 8.20L9.54 8.62L9.22 9.00L8.86 9.35L8.46 9.65L8.03 9.90L7.58 10.11L7.10 10.26L6.61 10.36L6.12 10.40L5.62 10.38L5.12 10.31L4.64 10.18L4.18 10.00L3.73 9.77L3.32 9.49L2.94 9.17L2.60 8.80L2.31 8.40L2.06 7.96L1.87 7.50L1.72 7.03L1.63 6.54L1.60 6.04L1.62 5.54L1.70 5.05L1.84 4.57L2.03 4.11L2.27 3.67L2.56 3.26L2.89 2.89L3.26 2.56L3.67 2.27L4.11 2.04L4.58 1.89L5.08 1.83L5.56 1.86L6.04 1.96L6.47 2.14L6.87 2.38L7.22 2.66L7.51 2.98L7.74 3.32L7.91 3.68L8.04 4.03L8.12 4.37L8.16 4.70L8.18 5.01L8.17 5.29L8.16 5.56L8.15 5.81L8.15 6.06L8.13 6.30L8.08 6.54L8.01 6.77L7.91 6.99L7.78 7.20L7.63 7.40L7.47 7.57L7.28 7.73L7.07 7.86L6.86 7.97L6.63 8.06L6.39 8.11L6.15 8.14L5.91 8.15L5.66 8.12L5.43 8.07L5.19 7.99L4.97 7.89L4.77 7.76L4.58 7.61L4.40 7.44L4.25 7.25L4.12 7.04L4.01 6.82L3.93 6.59L3.88 6.35L3.85 6.11L3.85 5.87L3.88 5.63L3.94 5.39L4.02 5.16L4.13 4.94L4.26 4.74L4.41 4.55L4.59 4.38L4.78 4.23L5.01 4.13L5.26 4.13L5.51 4.16L5.73 4.22L5.94 4.31L6.12 4.42L6.28 4.54L6.41 4.69L6.52 4.84L6.59 4.99L6.64 5.15L6.66 5.31L6.65 5.45" fill="none" stroke="#c0c0c0" stroke-width="1.25" stroke-linecap="round" stroke-linejoin="round"/></svg>
<div class="a" style="left:580px;top:676px;width:91px;height:18px;background:#1d1d1d;"></div>
<span class="t" style="left:587px;top:677.5px;font-family:'Liberation Sans','Noto Sans CJK JP',sans-serif;font-size:13px;font-weight:400;line-height:13px;color:#c8c8c8;transform:scaleX(0.7303);">なし</span>
<svg class="a" style="left:657.4px;top:682.4px;" width="9" height="5" viewBox="0 0 9 5"><path d="M0 0H9L4.5 5Z" fill="#d0d0d0"/></svg>
<div class="a" style="left:698px;top:677px;width:158px;height:16px;background:#92808a;box-shadow:inset 0 0 0 1px rgba(255,255,255,0.04);"></div>
<div class="a" style="left:0px;top:713px;width:690px;height:1px;background:#232323;"></div>
<div class="a" style="left:691px;top:713px;width:165px;height:1px;background:#222;"></div>
<div class="a" style="left:4px;top:697px;width:13px;height:13px;background:#1a1a1a;"></div>
<svg class="a" style="left:4.6px;top:699.6px;" width="12.4" height="8.4" viewBox="0 0 12.4 8.4"><path d="M0.2 4.2C2.2 0.8 4.4 0.1 6.2 0.1S10.2 0.8 12.2 4.2C10.2 7.6 8 8.3 6.2 8.3S2.2 7.6 0.2 4.2Z" fill="#ababab"/><path d="M2.2 4.2C3.6 2.4 4.8 1.9 6.2 1.9S8.8 2.4 10.2 4.2C8.8 6 7.6 6.5 6.2 6.5S3.6 6 2.2 4.2Z" fill="#444"/><circle cx="6.2" cy="4.2" r="2.5" fill="#161616"/><circle cx="7.3" cy="3.1" r="0.95" fill="#d8d8d8"/></svg>
<div class="a" style="left:34px;top:697px;width:13px;height:13px;background:#1a1a1a;background:linear-gradient(90deg,#191919 0,#191919 2.0px,#202020 2.0px,#202020 2.7px,#191919 2.7px,#191919 4.6px,#202020 4.6px,#202020 5.3px,#191919 5.3px,#191919 7.2px,#202020 7.2px,#202020 7.9px,#191919 7.9px,#191919 9.8px,#202020 9.8px,#202020 10.5px,#191919 10.5px,#191919 12.4px,#202020 12.4px,#202020 13.1px,#191919 13.1px);"></div>
<div class="a" style="left:49px;top:697px;width:13px;height:13px;background:#1a1a1a;background:linear-gradient(90deg,#191919 0,#191919 2.0px,#202020 2.0px,#202020 2.7px,#191919 2.7px,#191919 4.6px,#202020 4.6px,#202020 5.3px,#191919 5.3px,#191919 7.2px,#202020 7.2px,#202020 7.9px,#191919 7.9px,#191919 9.8px,#202020 9.8px,#202020 10.5px,#191919 10.5px,#191919 12.4px,#202020 12.4px,#202020 13.1px,#191919 13.1px);"></div>
<svg class="a" style="left:73px;top:700.4px;" width="7.4" height="7.4" viewBox="0 0 7.4 7.4"><path d="M0 0L7.4 3.7L0 7.4Z" fill="#c4c4c4"/></svg>
<div class="a" style="left:85px;top:697px;width:14px;height:14px;background:#e4bcc8;"></div>
<span class="t" style="left:106px;top:699px;font-family:'Liberation Sans','Noto Sans CJK JP',sans-serif;font-size:12px;font-weight:400;line-height:12px;color:#a9a9a9;transform:scaleX(0.8683);">10</span>
<svg class="a" style="left:136px;top:697px;" width="15" height="13" viewBox="0 0 15 13"><rect x="0.4" y="0.4" width="14.2" height="12.2" fill="#1c1c1c"/><rect x="1" y="1.6" width="13" height="9.8" fill="url(#skyg)"/><path d="M1.6 3H6.4V3.9H1.6Z" fill="#3f8fe0" opacity="0.8"/><path d="M1.4 7.6L2.4 5.6L3.4 6.8L4.2 5.2L5.4 7L6.6 6.4L7.8 7.2L10 6.8L12.6 7.4V8.2H1.4Z" fill="#2f6e50"/><path d="M2 9.4H11" stroke="#a8d0ec" stroke-width="0.5" opacity="0.7"/><rect x="3.4" y="1" width="8.2" height="0.9" fill="#fff"/><rect x="3.4" y="11.1" width="8.2" height="0.9" fill="#fff"/><path d="M0 0H4.2L0 4.2ZM15 0H10.8L15 4.2ZM0 13H4.2L0 8.8ZM15 13H10.8L15 8.8Z" fill="#3f90da"/></svg>
<span class="t" style="left:156px;top:699px;font-family:'Liberation Sans','Noto Sans CJK JP',sans-serif;font-size:12px;font-weight:400;line-height:12px;color:#a9a9a9;transform:scaleX(0.9538);">[man_03.png]</span>
<div class="a" style="left:425px;top:697px;width:13px;height:13px;background:#1a1a1a;"></div>
<div class="a" style="left:455px;top:697px;width:13px;height:13px;background:#1a1a1a;"></div>
<div class="a" style="left:530px;top:697px;width:13px;height:13px;background:#1a1a1a;"></div>
<svg class="a" style="left:425.8px;top:700px;" width="11.5" height="10" viewBox="0 0 11.5 10"><path d="M0.5 6A5.2 5.9 0 0 1 10.9 6Z" fill="#d4d4d4"/><path d="M2.9 2.9H8.5M5.7 2.9V6" stroke="#222" stroke-width="1.1" fill="none"/><path d="M0 7.2H3.7M7.7 7.2H11.4" stroke="#d4d4d4" stroke-width="1.1"/><path d="M5.7 5.6V9.7" stroke="#d4d4d4" stroke-width="2.3"/></svg>
<svg class="a" style="left:455.6px;top:698px;" width="12" height="11" viewBox="0 0 12 11"><path d="M0.6 10.4L11.2 0.6" stroke="#bcbcbc" stroke-width="1.5" fill="none"/></svg>
<div class="a" style="left:500px;top:697px;width:13px;height:13px;background:#1a1a1a;background:linear-gradient(90deg,#191919 0,#191919 2.0px,#202020 2.0px,#202020 2.7px,#191919 2.7px,#191919 4.6px,#202020 4.6px,#202020 5.3px,#191919 5.3px,#191919 7.2px,#202020 7.2px,#202020 7.9px,#191919 7.9px,#191919 9.8px,#202020 9.8px,#202020 10.5px,#191919 10.5px,#191919 12.4px,#202020 12.4px,#202020 13.1px,#191919 13.1px);"></div>
<div class="a" style="left:515px;top:697px;width:13px;height:13px;background:#1a1a1a;background:linear-gradient(90deg,#191919 0,#191919 2.0px,#202020 2.0px,#202020 2.7px,#191919 2.7px,#191919 4.6px,#202020 4.6px,#202020 5.3px,#191919 5.3px,#191919 7.2px,#202020 7.2px,#202020 7.9px,#191919 7.9px,#191919 9.8px,#202020 9.8px,#202020 10.5px,#191919 10.5px,#191919 12.4px,#202020 12.4px,#202020 13.1px,#191919 13.1px);"></div>
<svg class="a" style="left:531px;top:698px;" width="11.6" height="12" viewBox="0 0 11.6 12"><path d="M5.8 0.6L11 3.2V8.8L5.8 11.4L0.6 8.8V3.2Z" fill="#3c3c3c" stroke="#b4b4b4" stroke-width="1" stroke-linejoin="round"/><path d="M0.6 3.2L5.8 5.8L11 3.2M5.8 5.8V11.4" fill="none" stroke="#b4b4b4" stroke-width="1"/></svg>
<svg class="a" style="left:562px;top:697.4px;" width="12" height="12" viewBox="0 0 12 12"><path d="M9.60 3.48L9.87 3.90L10.08 4.35L10.24 4.82L10.35 5.31L10.40 5.81L10.39 6.31L10.33 6.80L10.21 7.29L10.04 7.75L9.81 8.20L9.54 8.62L9.22 9.00L8.86 9.35L8.46 9.65L8.03 9.90L7.58 10.11L7.10 10.26L6.61 10.36L6.12 10.40L5.62 10.38L5.12 10.31L4.64 10.18L4.18 10.00L3.73 9.77L3.32 9.49L2.94 9.17L2.60 8.80L2.31 8.40L2.06 7.96L1.87 7.50L1.72 7.03L1.63 6.54L1.60 6.04L1.62 5.54L1.70 5.05L1.84 4.57L2.03 4.11L2.27 3.67L2.56 3.26L2.89 2.89L3.26 2.56L3.67 2.27L4.11 2.04L4.58 1.89L5.08 1.83L5.56 1.86L6.04 1.96L6.47 2.14L6.87 2.38L7.22 2.66L7.51 2.98L7.74 3.32L7.91 3.68L8.04 4.03L8.12 4.37L8.16 4.70L8.18 5.01L8.17 5.29L8.16 5.56L8.15 5.81L8.15 6.06L8.13 6.30L8.08 6.54L8.01 6.77L7.91 6.99L7.78 7.20L7.63 7.40L7.47 7.57L7.28 7.73L7.07 7.86L6.86 7.97L6.63 8.06L6.39 8.11L6.15 8.14L5.91 8.15L5.66 8.12L5.43 8.07L5.19 7.99L4.97 7.89L4.77 7.76L4.58 7.61L4.40 7.44L4.25 7.25L4.12 7.04L4.01 6.82L3.93 6.59L3.88 6.35L3.85 6.11L3.85 5.87L3.88 5.63L3.94 5.39L4.02 5.16L4.13 4.94L4.26 4.74L4.41 4.55L4.59 4.38L4.78 4.23L5.01 4.13L5.26 4.13L5.51 4.16L5.73 4.22L5.94 4.31L6.12 4.42L6.28 4.54L6.41 4.69L6.52 4.84L6.59 4.99L6.64 5.15L6.66 5.31L6.65 5.45" fill="none" stroke="#c0c0c0" stroke-width="1.25" stroke-linecap="round" stroke-linejoin="round"/></svg>
<div class="a" style="left:580px;top:695px;width:91px;height:18px;background:#1d1d1d;"></div>
<span class="t" style="left:587px;top:696.5px;font-family:'Liberation Sans','Noto Sans CJK JP',sans-serif;font-size:13px;font-weight:400;line-height:13px;color:#c8c8c8;transform:scaleX(0.7303);">なし</span>
<svg class="a" style="left:657.4px;top:701.4px;" width="9" height="5" viewBox="0 0 9 5"><path d="M0 0H9L4.5 5Z" fill="#d0d0d0"/></svg>
<div class="a" style="left:698px;top:696px;width:158px;height:16px;background:#92808a;box-shadow:inset 0 0 0 1px rgba(255,255,255,0.04);"></div>
<div class="a" style="left:698px;top:714px;width:158px;height:8px;background:#202020;background:repeating-linear-gradient(135deg,#1e1e1e 0,#1e1e1e 1.4px,#2a2a2a 1.4px,#2a2a2a 2.8px);"></div>
<div class="a" style="left:690px;top:469px;width:1px;height:253px;background:#050505;"></div>
<div class="a" style="left:692px;top:503px;width:164px;height:1px;background:#0e0e0e;"></div>
<div class="a" style="left:692px;top:519px;width:164px;height:5px;background:#101010;"></div>
<div class="a" style="left:692px;top:520px;width:6px;height:3px;background:#2b2b2b;"></div>
<div class="a" style="left:698px;top:475px;width:71px;height:9px;background:#6a6a6a;"></div>
<svg class="a" style="left:691px;top:475px;" width="6" height="9" viewBox="0 0 6 9"><g ><path d="M6 0H2.4A2.4 2.4 0 0 0 0 2.4V6.6A2.4 2.4 0 0 0 2.4 9H6Z" fill="#2ba4ea"/><path d="M4 1.6V7.4" stroke="#0d4f80" stroke-width="1"/></g></svg>
<svg class="a" style="left:769.2px;top:475px;" width="6" height="9" viewBox="0 0 6 9"><g transform="translate(6 0) scale(-1 1)"><path d="M6 0H2.4A2.4 2.4 0 0 0 0 2.4V6.6A2.4 2.4 0 0 0 2.4 9H6Z" fill="#2ba4ea"/><path d="M4 1.6V7.4" stroke="#0d4f80" stroke-width="1"/></g></svg>
<div class="a" style="left:775px;top:475px;width:81px;height:9px;background:#3b3a39;box-shadow:inset 0 1px 0 #54463a,inset 0 -1px 0 #54463a;"></div>
<div class="a" style="left:740px;top:475px;width:1px;height:9px;background:#ff2020;"></div>
<span class="t" style="left:691px;top:486px;font-family:'Liberation Sans','Noto Sans CJK JP',sans-serif;font-size:11px;font-weight:400;line-height:11px;color:#b0b0b0;transform:scaleX(0.7765);clip-path:inset(0 0 0 12%);">0:00f</span>
<span class="t" style="left:772px;top:486px;font-family:'Liberation Sans','Noto Sans CJK JP',sans-serif;font-size:11px;font-weight:400;line-height:11px;color:#b0b0b0;transform:scaleX(0.8825);">00:12f</span>
<div class="a" style="left:698px;top:496px;width:1px;height:7px;background:#aaa;"></div>
<div class="a" style="left:787px;top:499px;width:1px;height:4px;background:#999;"></div>
<div class="a" style="left:698px;top:504px;width:158px;height:15px;background:#676767;"></div>
<svg class="a" style="left:691px;top:504px;" width="6" height="15" viewBox="0 0 6 15"><g ><path d="M6 0H2.4A2.4 2.4 0 0 0 0 2.4V12.6A2.4 2.4 0 0 0 2.4 15H6Z" fill="#2ba4ea"/><path d="M4 1.6V13.4" stroke="#0d4f80" stroke-width="1"/></g></svg>
<div class="a" style="left:698px;top:520px;width:158px;height:3px;background:#1fc01f;"></div>
<div class="a" style="left:742px;top:505px;width:38px;height:12px;background:#a4a4a4;box-shadow:1px 1px 0 #4a4a4a;"></div>
<svg class="a" style="left:736.6px;top:508px" width="12" height="11"><path d="M0.6 10.4V5.6L5.8 0.8L11 5.6V10.4Z" fill="#8c8c8c" stroke="#f0f0f0" stroke-width="1.1"/><path d="M5.8 1.6V10" stroke="#b8b8b8" stroke-width="1"/></svg>
<span class="t" style="left:749.6px;top:505.9px;font-family:'Liberation Sans','Noto Sans CJK JP',sans-serif;font-size:11px;font-weight:400;line-height:11px;color:#2a2a2a;transform:scaleX(0.9975);">//exp</span>
<div class="a" style="left:853px;top:500px;width:1px;height:222px;background:#f01010;"></div>
<svg class="a" style="left:848px;top:489px" width="11" height="14"><path d="M0 0H11V5L5.6 13.4L0 5Z" fill="#2eb0f0"/><path d="M3.4 1.6V4.6M5.6 1.6V4.6M7.8 1.6V4.6" stroke="#14587e" stroke-width="0.9"/><path d="M4 6.4H7.2M5.6 6.4V13" stroke="#0a0a0a" stroke-width="1"/></svg>
</body></html>
